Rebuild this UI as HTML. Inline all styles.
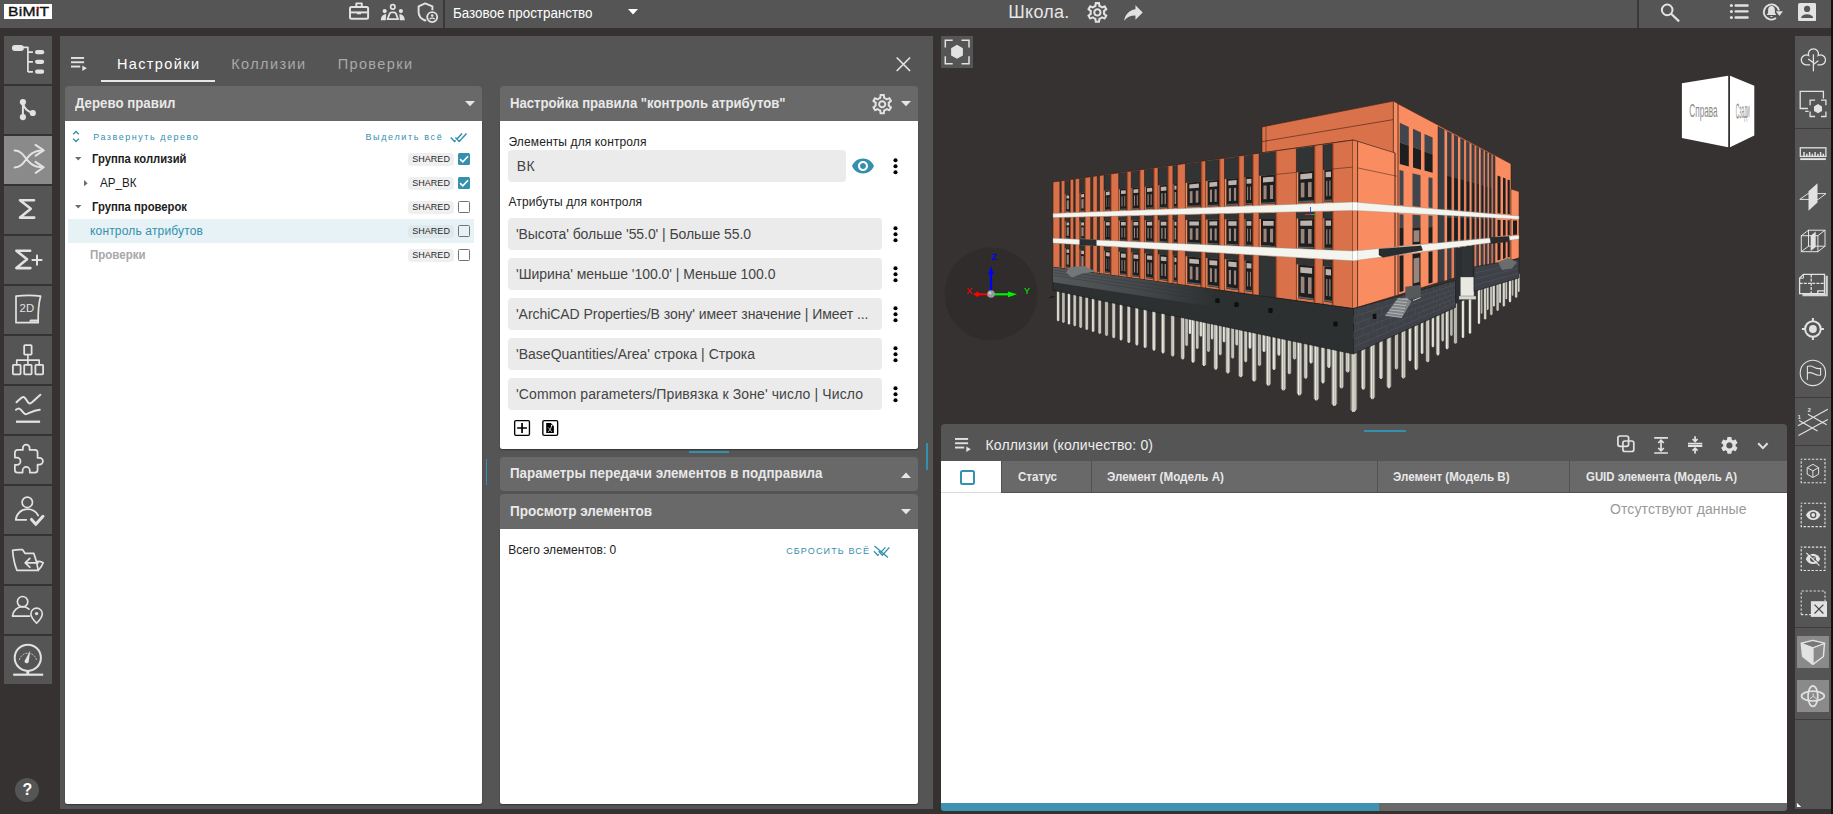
<!DOCTYPE html>
<html lang="ru"><head><meta charset="utf-8"><title>BiMiT</title>
<style>
html,body{margin:0;padding:0}
body{width:1833px;height:814px;overflow:hidden;background:#363231;position:relative;font-family:"Liberation Sans", sans-serif;}
div,span,svg{position:absolute;box-sizing:border-box}
.t{white-space:nowrap;line-height:1}
</style></head><body>
<div style="left:0px;top:0px;width:1831px;height:28px;background:#555555;"></div>
<div style="left:1831px;top:0px;width:2px;height:814px;background:#141212;"></div>
<div style="left:4px;top:4px;width:48px;height:15px;background:#ffffff;"></div>
<div style="left:443.2px;top:0px;width:1.8px;height:28px;background:#3b3838;"></div>
<svg style="left:628px;top:9px" width="10" height="6" viewBox="0 0 10 6"><path d="M0 0h10L5 5.4z" fill="#fff"/></svg>
<div style="left:1637.2px;top:0px;width:1.8px;height:28px;background:#3b3838;"></div>
<div style="left:4px;top:36px;width:48px;height:48px;background:#555555;"></div>
<div style="left:4px;top:86px;width:48px;height:48px;background:#555555;"></div>
<div style="left:4px;top:136px;width:48px;height:48px;background:#8a8a8a;"></div>
<div style="left:4px;top:186px;width:48px;height:48px;background:#555555;"></div>
<div style="left:4px;top:236px;width:48px;height:48px;background:#555555;"></div>
<div style="left:4px;top:286px;width:48px;height:48px;background:#555555;"></div>
<div style="left:4px;top:336px;width:48px;height:48px;background:#555555;"></div>
<div style="left:4px;top:386px;width:48px;height:48px;background:#555555;"></div>
<div style="left:4px;top:436px;width:48px;height:48px;background:#555555;"></div>
<div style="left:4px;top:486px;width:48px;height:48px;background:#555555;"></div>
<div style="left:4px;top:536px;width:48px;height:48px;background:#555555;"></div>
<div style="left:4px;top:586px;width:48px;height:48px;background:#555555;"></div>
<div style="left:4px;top:636px;width:48px;height:48px;background:#555555;"></div>
<div style="left:15px;top:778px;width:24px;height:24px;background:#555555;border-radius:50%"></div>
<div style="left:60px;top:36px;width:873px;height:773px;background:#555555;"></div>
<div style="left:101px;top:80px;width:114px;height:2px;background:#e6e6e6;"></div>
<div style="left:65px;top:86px;width:417px;height:35px;background:#696969;border-radius:4px 4px 0 0"></div>
<div style="left:65px;top:121px;width:417px;height:683px;background:#ffffff;border-radius:0 0 2.5px 2.5px;box-shadow:0 1px 1.5px rgba(0,0,0,.4)"></div>
<svg style="left:465px;top:101px" width="10" height="6" viewBox="0 0 10 6"><path d="M0 0h10L5 5.2z" fill="#e6e6e6"/></svg>
<div style="left:68px;top:219px;width:406px;height:23.5px;background:#e6f2f5;"></div>
<div style="left:408px;top:152.5px;width:46px;height:13.5px;background:#efefef;border-radius:4px"></div>
<svg style="left:458px;top:153px" width="12" height="12" viewBox="0 0 12 12"><rect width="12" height="12" rx="1.5" fill="#3490ad"/><path d="M2 6.100l2.800 2.800 5.300-5.600" stroke="#fff" stroke-width="1.600" fill="none"/></svg>
<div style="left:408px;top:176.5px;width:46px;height:13.5px;background:#efefef;border-radius:4px"></div>
<svg style="left:458px;top:177px" width="12" height="12" viewBox="0 0 12 12"><rect width="12" height="12" rx="1.5" fill="#3490ad"/><path d="M2 6.100l2.800 2.800 5.300-5.600" stroke="#fff" stroke-width="1.600" fill="none"/></svg>
<div style="left:408px;top:200.5px;width:46px;height:13.5px;background:#efefef;border-radius:4px"></div>
<div style="left:458px;top:201px;width:12px;height:12px;background:transparent;border:1.5px solid #727272;border-radius:1.5px"></div>
<div style="left:408px;top:224.5px;width:46px;height:13.5px;background:#dfe9ec;border-radius:4px"></div>
<div style="left:458px;top:225px;width:12px;height:12px;background:transparent;border:1.5px solid #727272;border-radius:1.5px"></div>
<div style="left:408px;top:248.5px;width:46px;height:13.5px;background:#efefef;border-radius:4px"></div>
<div style="left:458px;top:249px;width:12px;height:12px;background:transparent;border:1.5px solid #727272;border-radius:1.5px"></div>
<svg style="left:75.2px;top:157.2px" width="6.4" height="4" viewBox="0 0 6.4 4"><path d="M0 0h6.4L3.2 3.5z" fill="#6c6c6c"/></svg>
<svg style="left:75.2px;top:205.2px" width="6.4" height="4" viewBox="0 0 6.4 4"><path d="M0 0h6.4L3.2 3.5z" fill="#6c6c6c"/></svg>
<svg style="left:84.2px;top:179.6px" width="4" height="6.4" viewBox="0 0 4 6.4"><path d="M0 0v6.4L3.6 3.2z" fill="#6c6c6c"/></svg>
<div style="left:500px;top:86px;width:418px;height:35px;background:#696969;border-radius:4px 4px 0 0"></div>
<div style="left:500px;top:121px;width:418px;height:328px;background:#ffffff;border-radius:0 0 2.5px 2.5px;box-shadow:0 1px 1.5px rgba(0,0,0,.4)"></div>
<svg style="left:901px;top:101px" width="10" height="6" viewBox="0 0 10 6"><path d="M0 0h10L5 5.2z" fill="#e6e6e6"/></svg>
<div style="left:508px;top:150px;width:338px;height:32px;background:#ebebeb;border-radius:4px"></div>
<div style="left:508px;top:218px;width:374px;height:32px;background:#ebebeb;border-radius:4px"></div>
<div style="left:508px;top:258px;width:374px;height:32px;background:#ebebeb;border-radius:4px"></div>
<div style="left:508px;top:298px;width:374px;height:32px;background:#ebebeb;border-radius:4px"></div>
<div style="left:508px;top:338px;width:374px;height:32px;background:#ebebeb;border-radius:4px"></div>
<div style="left:508px;top:378px;width:374px;height:32px;background:#ebebeb;border-radius:4px"></div>
<svg style="left:893px;top:157.7px" width="5" height="17" viewBox="0 0 5 17"><circle cx="2.5" cy="2.3" r="2.05"/><circle cx="2.5" cy="8.3" r="2.05"/><circle cx="2.5" cy="14.3" r="2.05"/></svg>
<svg style="left:893px;top:225.7px" width="5" height="17" viewBox="0 0 5 17"><circle cx="2.5" cy="2.3" r="2.05"/><circle cx="2.5" cy="8.3" r="2.05"/><circle cx="2.5" cy="14.3" r="2.05"/></svg>
<svg style="left:893px;top:265.7px" width="5" height="17" viewBox="0 0 5 17"><circle cx="2.5" cy="2.3" r="2.05"/><circle cx="2.5" cy="8.3" r="2.05"/><circle cx="2.5" cy="14.3" r="2.05"/></svg>
<svg style="left:893px;top:305.7px" width="5" height="17" viewBox="0 0 5 17"><circle cx="2.5" cy="2.3" r="2.05"/><circle cx="2.5" cy="8.3" r="2.05"/><circle cx="2.5" cy="14.3" r="2.05"/></svg>
<svg style="left:893px;top:345.7px" width="5" height="17" viewBox="0 0 5 17"><circle cx="2.5" cy="2.3" r="2.05"/><circle cx="2.5" cy="8.3" r="2.05"/><circle cx="2.5" cy="14.3" r="2.05"/></svg>
<svg style="left:893px;top:385.7px" width="5" height="17" viewBox="0 0 5 17"><circle cx="2.5" cy="2.3" r="2.05"/><circle cx="2.5" cy="8.3" r="2.05"/><circle cx="2.5" cy="14.3" r="2.05"/></svg>
<div style="left:688.5px;top:450.6px;width:40.5px;height:2px;background:#3490ad;"></div>
<div style="left:485.5px;top:459px;width:1.6px;height:26px;background:#3490ad;"></div>
<div style="left:926.4px;top:443px;width:1.6px;height:27px;background:#3490ad;"></div>
<div style="left:500px;top:456.5px;width:418px;height:34px;background:#696969;border-radius:4px"></div>
<svg style="left:900.5px;top:471.5px" width="10" height="6" viewBox="0 0 10 6"><path d="M0 6h10L5 0.6z" fill="#e6e6e6"/></svg>
<div style="left:500px;top:494px;width:418px;height:35px;background:#696969;border-radius:4px 4px 0 0"></div>
<div style="left:500px;top:528.5px;width:418px;height:275.5px;background:#ffffff;border-radius:0 0 2.5px 2.5px;box-shadow:0 1px 1.5px rgba(0,0,0,.4)"></div>
<svg style="left:900.5px;top:509px" width="10" height="6" viewBox="0 0 10 6"><path d="M0 0h10L5 5.2z" fill="#e6e6e6"/></svg>
<div style="left:941px;top:36px;width:32px;height:32px;background:#555555;"></div>
<div style="left:941px;top:424px;width:846px;height:37px;background:#555555;border-radius:4px 4px 0 0"></div>
<div style="left:1364px;top:430.3px;width:42px;height:2px;background:#3490ad;"></div>
<div style="left:941px;top:461px;width:60px;height:32px;background:#ffffff;"></div>
<div style="left:1001px;top:461px;width:786px;height:31.6px;background:#696969;border-left:1px solid #525252;border-bottom:1px solid #525252"></div>
<div style="left:1090.5px;top:461px;width:1px;height:31px;background:#525252;"></div>
<div style="left:1376.5px;top:461px;width:1px;height:31px;background:#525252;"></div>
<div style="left:1568.5px;top:461px;width:1px;height:31px;background:#525252;"></div>
<div style="left:941px;top:492.6px;width:846px;height:310.4px;background:#ffffff;"></div>
<div style="left:941px;top:491.8px;width:60px;height:0.8px;background:#dcdcdc;"></div>
<div style="left:959.5px;top:469.5px;width:15px;height:15px;background:#ffffff;border:2px solid #3490ad;border-radius:2.5px"></div>
<div style="left:941px;top:803px;width:437.5px;height:8px;background:#3c94b1;border-radius:0 0 0 3px"></div>
<div style="left:1378.5px;top:803px;width:408.5px;height:8px;background:#696969;border-radius:0 0 3px 0"></div>
<div style="left:1795px;top:36px;width:36px;height:773px;background:#555555;"></div>
<div style="left:1795px;top:127.5px;width:36px;height:1.2px;background:#3f3c3b;"></div>
<div style="left:1795px;top:396.5px;width:36px;height:1.2px;background:#3f3c3b;"></div>
<div style="left:1795px;top:444.5px;width:36px;height:1.2px;background:#3f3c3b;"></div>
<div style="left:1795px;top:627.0px;width:36px;height:1.2px;background:#3f3c3b;"></div>
<div style="left:1795px;top:718.8px;width:36px;height:1.2px;background:#3f3c3b;"></div>
<div style="left:1797px;top:636px;width:32px;height:32px;background:#8a8a8a;"></div>
<div style="left:1797px;top:680px;width:32px;height:32px;background:#8a8a8a;"></div>
<svg style="left:4px;top:36px;" width="48" height="48" viewBox="0 0 48 48"><g fill="none" stroke="#e2e2e2" stroke-width="1.8" stroke-linecap="round" stroke-linejoin="round"><rect x="7.9" y="9" width="12" height="6" rx="3" fill="#e2e2e2" stroke="none"/><path d="M19 11.3h4.9V36M23.9 16.2h5M23.9 25.8h5M23.9 35.8h5" stroke-width="1.7" stroke-linecap="butt"/><rect x="31" y="14" width="9.2" height="4.3" rx="2.15" fill="#e2e2e2" stroke="none"/><rect x="31" y="23.7" width="9.2" height="4.3" rx="2.15" fill="#e2e2e2" stroke="none"/><rect x="31" y="33.5" width="9.2" height="4.3" rx="2.15" fill="#e2e2e2" stroke="none"/></g></svg>
<svg style="left:4px;top:86px;" width="48" height="48" viewBox="0 0 48 48"><g fill="none" stroke="#e2e2e2" stroke-width="1.8" stroke-linecap="round" stroke-linejoin="round"><circle cx="18.9" cy="16" r="3.1" fill="#e2e2e2" stroke="none"/><circle cx="18.9" cy="31.1" r="3.1" fill="#e2e2e2" stroke="none"/><circle cx="28.8" cy="27" r="3.1" fill="#e2e2e2" stroke="none"/><path d="M18.9 16v15M18.9 17c1 5 4.5 8.5 9.9 10" stroke-width="2"/></g></svg>
<svg style="left:4px;top:136px;" width="48" height="48" viewBox="0 0 48 48"><g fill="none" stroke="#e2e2e2" stroke-width="1.8" stroke-linecap="round" stroke-linejoin="round"><path d="M10.6 14.5c12 0 10 16.8 28 16.8M10.6 31.5c12 0 10-17 28-17" stroke-width="2"/><path d="M31.5 8.8l8.2 5.6-8 5.3M31.5 25.8l8.2 5.5-8 5.6" stroke-width="2"/></g></svg>
<svg style="left:4px;top:186px;" width="48" height="48" viewBox="0 0 48 48"><g fill="none" stroke="#e2e2e2" stroke-width="1.8" stroke-linecap="round" stroke-linejoin="round"><path d="M30 14.2H16l10.8 8.6L16 31.6h14.2" stroke-width="2.6"/></g></svg>
<svg style="left:4px;top:236px;" width="48" height="48" viewBox="0 0 48 48"><g fill="none" stroke="#e2e2e2" stroke-width="1.8" stroke-linecap="round" stroke-linejoin="round"><path d="M26.2 14.7H12.4l10.6 8.6-10.6 8.8h14" stroke-width="2.6"/><path d="M33 19.5v9.2M28.4 24.1h9.2" stroke-width="2"/></g></svg>
<svg style="left:4px;top:286px;" width="48" height="48" viewBox="0 0 48 48"><g fill="none" stroke="#e2e2e2" stroke-width="1.8" stroke-linecap="round" stroke-linejoin="round"><path d="M12 10.2c8-1 16-1.2 24.6 0-2.2 8-2.6 16.500-2.400 26.5H12z" stroke-width="1.7"/><path d="M24.800 35.800l1.600-2.200h7.800v2.200z" fill="#e2e2e2" stroke="none"/><text x="15.6" y="26.4" font-family="Liberation Sans, sans-serif" font-size="10.5" fill="#e2e2e2" stroke="none" textLength="14.5" lengthAdjust="spacingAndGlyphs">2D</text></g></svg>
<svg style="left:4px;top:336px;" width="48" height="48" viewBox="0 0 48 48"><g fill="none" stroke="#e2e2e2" stroke-width="1.8" stroke-linecap="round" stroke-linejoin="round"><rect x="20.2" y="9.200" width="7.400" height="9.4" rx="0.8"/><rect x="8.900" y="28.8" width="7.700" height="9.5" rx="0.8"/><rect x="20.2" y="28.8" width="7.400" height="9.5" rx="0.8"/><rect x="31.400" y="28.8" width="7.700" height="9.5" rx="0.8"/><path d="M23.9 18.6v10.2M12.700 28.800v-4.700h22.500v4.700" stroke-width="1.6"/></g></svg>
<svg style="left:4px;top:386px;" width="48" height="48" viewBox="0 0 48 48"><g fill="none" stroke="#e2e2e2" stroke-width="1.8" stroke-linecap="round" stroke-linejoin="round"><path d="M12.5 16.300c3-3 5-5.400 7-5.400 2.200 0 3.800 6.600 6.200 6.600 2.200 0 6.300-5.200 10.700-8.700M12 23.800c1.200-1 2.200-1.500 3.400-1.200 2 .6 4 5.600 6.300 5.600 2.400 0 6.500-3.800 14.100-4.400" stroke-width="2"/><path d="M12 35.700h24.100" stroke-width="2.300" stroke-linecap="butt"/></g></svg>
<svg style="left:4px;top:436px;" width="48" height="48" viewBox="0 0 48 48"><g fill="none" stroke="#e2e2e2" stroke-width="1.8" stroke-linecap="round" stroke-linejoin="round"><g transform="translate(8.2,7.200) scale(1.335)"><path d="M20.5 11H19V7c0-1.100-.9-2-2-2h-4V3.500C13 2.120 11.880 1 10.500 1S8 2.120 8 3.500V5H4c-1.100 0-1.990.9-1.990 2v3.800H3.500c1.490 0 2.700 1.210 2.700 2.700s-1.210 2.700-2.700 2.700H2V20c0 1.100.9 2 2 2h3.800v-1.500c0-1.490 1.210-2.700 2.700-2.700 1.490 0 2.700 1.210 2.700 2.700V22H17c1.100 0 2-.9 2-2v-4h1.500c1.380 0 2.500-1.120 2.500-2.500S21.880 11 20.500 11z" stroke-width="1.300"/></g></g></svg>
<svg style="left:4px;top:486px;" width="48" height="48" viewBox="0 0 48 48"><g fill="none" stroke="#e2e2e2" stroke-width="1.8" stroke-linecap="round" stroke-linejoin="round"><circle cx="23.300" cy="16.300" r="5.200" stroke-width="1.700"/><path d="M22.300 33.800H11.700c.6-6 5.600-10.600 11.600-10.600 4.800 0 8.900 2.600 10.900 6.300" stroke-width="1.700"/><path d="M27.500 33.400l4.300 4.900 7.200-8" stroke-width="3"/></g></svg>
<svg style="left:4px;top:536px;" width="48" height="48" viewBox="0 0 48 48"><g fill="none" stroke="#e2e2e2" stroke-width="1.8" stroke-linecap="round" stroke-linejoin="round"><path d="M8.600 14.400c3.500-.9 7-.9 10-.7l2.500 3.700h8.700c2.200 5.500 3.500 11 4.400 16.900H12.900C10.400 28 9.100 21 8.600 14.400z" stroke-width="1.700"/><path d="M33 25.500c2-.2 4.200.2 6.200 1.300-1 2.800-2.600 5.300-5 7.500" stroke-width="1.700"/><path d="M34 26.800H21.300M25.800 22.400l-4.600 4.400 4.600 4.400" stroke-width="1.800"/></g></svg>
<svg style="left:4px;top:586px;" width="48" height="48" viewBox="0 0 48 48"><g fill="none" stroke="#e2e2e2" stroke-width="1.8" stroke-linecap="round" stroke-linejoin="round"><circle cx="18.600" cy="15.700" r="5.200" stroke-width="1.700"/><path d="M25.500 30.100H8.500c.5-5.300 4.800-9.400 10.100-9.400 2.500 0 4.600.9 6.400 2.500" stroke-width="1.700"/><path d="M32.600 37.300c-3.600-3.600-5.700-6.400-5.700-9.500a5.700 5.700 0 0 1 11.400 0c0 3.100-2.100 5.900-5.700 9.500z" stroke-width="1.600"/><circle cx="32.600" cy="27.600" r="1.700" fill="#e2e2e2" stroke="none"/></g></svg>
<svg style="left:4px;top:636px;" width="48" height="48" viewBox="0 0 48 48"><g fill="none" stroke="#e2e2e2" stroke-width="1.8" stroke-linecap="round" stroke-linejoin="round"><circle cx="23.800" cy="21.800" r="13.100" stroke-width="2"/><path d="M9.200 38.700h30" stroke-width="2.200" stroke-linecap="butt"/><path d="M23.800 35v3.500" stroke-width="3" stroke-linecap="butt"/><path d="M26.300 14.600l-1.600 11.300a2.200 2.200 0 0 1-4.200-1z" fill="#e2e2e2" stroke="none"/><path d="M15.500 23.500a8.800 8.800 0 0 1 16.900 0" stroke-width="1" stroke-dasharray="1.200 1.800" opacity=".8"/></g></svg>
<svg style="left:340px;top:0px;" width="110" height="28" viewBox="0 0 110 28"><g fill="none" stroke="#e2e2e2" stroke-width="2" stroke-linejoin="round"><rect x="10" y="7" width="18.100" height="11.800" rx="1.500"/><path d="M16.300 7V3.400h5.500V7" stroke-width="1.900"/><path d="M10 12.400h18" stroke-width="2"/><path d="M17 12.600h4v1.700h-4z" fill="#e2e2e2" stroke="none"/><circle cx="52.800" cy="6.900" r="2.200" stroke-width="1.700"/><path d="M47.500 19.200l2-5.300c.4-1 1.200-1.600 2.200-1.600h2.200c1 0 1.800.6 2.200 1.600l2 5.300z" stroke-width="1.800"/><circle cx="44.700" cy="11.100" r="2.100" fill="#e2e2e2" stroke="none"/><circle cx="60.900" cy="11.100" r="2.100" fill="#e2e2e2" stroke="none"/><path d="M40.800 20.200c.2-3.300 1.800-5.700 5.400-6.100l-.4 6.100zM64.800 20.200c-.2-3.300-1.800-5.700-5.400-6.100l.4 6.100z" fill="#e2e2e2" stroke="none"/><path d="M92.400 10.300V6.400l-7.200-3-6.600 3V12c0 4 2.800 7 6.600 8.500l1-.5" stroke-width="1.900"/><circle cx="92.200" cy="17.100" r="5" stroke-width="1.900"/><circle cx="92.200" cy="15.600" r="1.300" fill="#e2e2e2" stroke="none"/><path d="M89.700 19.200c.8-1.500 4.200-1.500 5 0" stroke-width="1.300"/></g></svg>
<svg style="left:1085.2px;top:-0.3px;" width="24.8" height="24.8" viewBox="0 0 24 24"><path d="M19.430 12.980c.040-.320.070-.640.070-.980 0-.340-.030-.660-.070-.980l2.110-1.650c.190-.150.240-.420.120-.640l-2-3.460c-.090-.160-.260-.250-.440-.250-.060 0-.120.010-.170.030l-2.490 1c-.520-.400-1.080-.730-1.690-.980l-.380-2.650C14.460 2.180 14.250 2 14 2h-4c-.250 0-.460.180-.490.420l-.380 2.650c-.610.250-1.170.590-1.690.980l-2.490-1c-.060-.020-.120-.030-.180-.030-.170 0-.340.090-.430.250l-2 3.460c-.130.220-.070.490.120.640l2.110 1.650c-.040.320-.070.650-.070.980 0 .330.030.660.070.980l-2.110 1.650c-.190.150-.240.420-.120.640l2 3.460c.090.160.260.250.440.250.060 0 .120-.010.170-.030l2.490-1c.520.400 1.080.730 1.690.980l.380 2.650c.030.240.240.420.490.420h4c.250 0 .460-.180.490-.420l.380-2.650c.610-.250 1.170-.590 1.690-.980l2.490 1c.060.020.120.030.180.030.170 0 .340-.090.430-.250l2-3.460c.120-.220.070-.490-.120-.640l-2.110-1.650zm-1.980-1.710c.040.310.050.520.050.730 0 .210-.020.430-.050.730l-.140 1.130.890.700 1.080.840-.700 1.210-1.270-.510-1.040-.420-.900.680c-.430.320-.840.560-1.250.730l-1.060.430-.160 1.130-.200 1.350h-1.400l-.190-1.350-.160-1.130-1.060-.430c-.430-.180-.830-.410-1.230-.710l-.910-.700-1.060.430-1.270.510-.700-1.210 1.080-.840.890-.700-.140-1.130c-.030-.310-.050-.540-.050-.740s.020-.430.050-.730l.140-1.130-.890-.700-1.080-.840.700-1.210 1.270.510 1.040.420.900-.680c.430-.320.840-.560 1.250-.730l1.060-.430.160-1.130.200-1.350h1.390l.190 1.350.160 1.130 1.060.430c.430.180.830.410 1.230.710l.910.700 1.060-.430 1.270-.510.700 1.210-1.070.850-.890.700.140 1.130zM12 8c-2.210 0-4 1.790-4 4s1.790 4 4 4 4-1.790 4-4-1.790-4-4-4zm0 6c-1.100 0-2-.9-2-2s.9-2 2-2 2 .9 2 2-.9 2-2 2z" fill="#e2e2e2"/></svg>
<svg style="left:1120.9px;top:-0.1px;" width="24.8" height="24.8" viewBox="0 0 24 24"><path d="M14 9V5l7 7-7 7v-4.100c-5 0-8.500 1.600-11 5.100 1-5 4-10 11-11z" fill="#e2e2e2"/></svg>
<svg style="left:1655px;top:0px;" width="30" height="28" viewBox="0 0 30 28"><g fill="none" stroke="#e2e2e2" stroke-width="2"><circle cx="12.200" cy="9.900" r="5.300"/><path d="M16.100 13.800l8 7.600" stroke-width="2.200"/></g></svg>
<svg style="left:1725px;top:0px;" width="30" height="28" viewBox="0 0 30 28"><g fill="#e2e2e2"><circle cx="6.400" cy="5.500" r="1.500"/><circle cx="6.400" cy="11.400" r="1.500"/><circle cx="6.400" cy="17.500" r="1.500"/><rect x="9.500" y="4.300" width="14.200" height="2.400" rx="1"/><rect x="9.500" y="10.200" width="14.200" height="2.400" rx="1"/><rect x="9.500" y="16.300" width="14.200" height="2.400" rx="1"/></g></svg>
<svg style="left:1760px;top:0px;" width="26" height="28" viewBox="0 0 26 28"><g fill="none" stroke="#e2e2e2" stroke-width="1.900"><path d="M18.900 10.500a7.600 7.600 0 1 0-2.900 7.600"/></g><path d="M15.900 11.300h7l-3.500 4.800z" fill="#e2e2e2"/><path d="M11.500 5.900c2.300 0 3.400 1.800 3.400 4v3.200l1.200 1.300v.7H6.900v-.7l1.200-1.300V9.900c0-2.200 1.100-4 3.400-4zM10.300 15.900h2.400c0 .7-.5 1.200-1.200 1.200s-1.200-.5-1.200-1.200z" fill="#e2e2e2"/></svg>
<svg style="left:1797.8px;top:3px;" width="18.2" height="18.2" viewBox="0 0 18.2 18.2"><rect width="18.200" height="18.200" rx="1.800" fill="#e2e2e2"/><circle cx="9.100" cy="5.900" r="3.100" fill="#555555"/><path d="M3 14.900c.4-2.400 3-3.700 6.100-3.700s5.700 1.300 6.100 3.700z" fill="#555555"/></svg>
<svg style="left:70.9px;top:56.8px;" width="17" height="15" viewBox="0 0 17 15"><g fill="#e2e2e2"><rect x="0" y="0" width="13.100" height="1.900"/><rect x="0" y="4.300" width="13.100" height="1.900"/><rect x="0" y="8.600" width="9.200" height="1.900"/><path d="M11.300 8.600l4.600 2.700-4.600 2.700z"/></g></svg>
<svg style="left:955px;top:437.7px;" width="17" height="15" viewBox="0 0 17 15"><g fill="#e2e2e2"><rect x="0" y="0" width="13.100" height="1.900"/><rect x="0" y="4.300" width="13.100" height="1.900"/><rect x="0" y="8.600" width="9.200" height="1.900"/><path d="M11.300 8.600l4.600 2.700-4.600 2.700z"/></g></svg>
<svg style="left:895px;top:56px;" width="17" height="17" viewBox="0 0 17 17"><path d="M1.700 1.500l13.400 13.500M15.100 1.500L1.700 15" stroke="#e2e2e2" stroke-width="1.700" fill="none"/></svg>
<svg style="left:869.6px;top:91.6px;" width="24.4" height="24.4" viewBox="0 0 24 24"><path d="M19.430 12.980c.040-.320.070-.640.070-.980 0-.340-.030-.660-.070-.980l2.110-1.650c.190-.150.240-.420.120-.640l-2-3.460c-.090-.160-.260-.250-.440-.250-.060 0-.120.010-.170.030l-2.490 1c-.520-.400-1.080-.730-1.690-.980l-.380-2.650C14.460 2.180 14.250 2 14 2h-4c-.250 0-.460.180-.490.420l-.380 2.650c-.610.250-1.170.590-1.690.980l-2.490-1c-.060-.020-.120-.030-.180-.030-.170 0-.340.090-.430.250l-2 3.460c-.130.220-.070.490.120.640l2.110 1.650c-.040.320-.070.650-.070.980 0 .330.030.660.070.980l-2.110 1.650c-.190.150-.240.420-.120.640l2 3.460c.090.160.260.250.440.250.060 0 .120-.010.170-.030l2.490-1c.520.400 1.080.730 1.690.980l.380 2.650c.030.240.240.420.490.420h4c.250 0 .460-.180.490-.420l.380-2.650c.610-.250 1.170-.590 1.690-.980l2.490 1c.060.020.120.030.180.030.170 0 .340-.090.430-.250l2-3.460c.120-.220.070-.490-.120-.640l-2.110-1.650zm-1.980-1.710c.040.310.050.520.050.730 0 .210-.020.430-.050.730l-.140 1.130.890.700 1.080.840-.700 1.210-1.270-.510-1.040-.420-.900.680c-.430.320-.840.560-1.250.730l-1.060.430-.160 1.130-.200 1.350h-1.400l-.190-1.350-.160-1.130-1.060-.430c-.430-.180-.830-.410-1.230-.710l-.910-.700-1.060.430-1.270.510-.700-1.210 1.080-.840.890-.700-.140-1.130c-.030-.310-.050-.540-.050-.740s.020-.430.050-.730l.140-1.130-.890-.700-1.080-.840.700-1.210 1.270.510 1.040.420.900-.680c.430-.320.840-.560 1.250-.730l1.060-.430.160-1.130.200-1.350h1.390l.190 1.350.160 1.130 1.060.430c.430.180.830.410 1.230.710l.910.700 1.060-.430 1.270-.510.700 1.210-1.070.850-.890.700.140 1.130zM12 8c-2.210 0-4 1.790-4 4s1.790 4 4 4 4-1.790 4-4-1.790-4-4-4zm0 6c-1.100 0-2-.9-2-2s.9-2 2-2 2 .9 2 2-.9 2-2 2z" fill="#e2e2e2"/></svg>
<svg style="left:851.2px;top:154px;" width="24" height="24" viewBox="0 0 24 24"><path d="M12 4.500C7 4.500 2.730 7.610 1 12c1.730 4.390 6 7.500 11 7.500s9.270-3.110 11-7.500c-1.730-4.390-6-7.500-11-7.500zM12 17c-2.760 0-5-2.240-5-5s2.240-5 5-5 5 2.240 5 5-2.240 5-5 5zm0-8c-1.660 0-3 1.340-3 3s1.340 3 3 3 3-1.340 3-3-1.340-3-3-3z" fill="#3490ad"/></svg>
<svg style="left:513px;top:419px;" width="18" height="18" viewBox="0 0 18 18"><rect x="1.650" y="1.550" width="14.800" height="14.800" rx="1.300" fill="#fff" stroke="#000" stroke-width="1.350"/><path d="M9.050 4.100v9.800M4.150 9h9.800" stroke="#000" stroke-width="1.700"/></svg>
<svg style="left:541px;top:419px;" width="18" height="18" viewBox="0 0 18 18"><rect x="1.850" y="1.550" width="14.800" height="14.800" rx="1.300" fill="#fff" stroke="#000" stroke-width="1.350"/><path d="M5.200 4.100h4.700l3 3.100v6.700H5.200z" fill="#000"/><path d="M7.400 8.600l3.300 4.200M10.900 6.300l-1.400 3.600-2.300 2.900" stroke="#ddd" stroke-width="0.900" fill="none"/><circle cx="10.600" cy="6.500" r="0.700" fill="#fff"/></svg>
<svg style="left:72px;top:129.8px;" width="8" height="13" viewBox="0 0 8 13"><path d="M1.200 4.200L4 1.500l2.800 2.700M1.200 8.800L4 11.500l2.800-2.700" fill="none" stroke="#3490ad" stroke-width="1.400"/></svg>
<svg style="left:450px;top:132px;" width="18" height="11" viewBox="0 0 18 11"><path d="M0.800 5.400l3.800 4 1-1M5.400 5.400l3.800 4 7.300-8M12 1.400l-5 5.500" fill="none" stroke="#3490ad" stroke-width="1.500"/></svg>
<svg style="left:873px;top:544.5px;" width="18" height="13" viewBox="0 0 18 13"><path d="M1 6.200l3.800 4 1-1M5.600 6.200l3.800 4 7-7.800M12.400 2.400l-4.600 5M1.500 1l13.500 11.500" fill="none" stroke="#3490ad" stroke-width="1.300"/></svg>
<svg style="left:941px;top:36px;" width="32" height="32" viewBox="0 0 32 32"><g fill="none" stroke="#e2e2e2" stroke-width="1.500"><path d="M4.300 11.500V4.300h7.400M20.500 4.300h7.500v7.200M28 20.300v7.400h-7.500M11.700 27.700H4.300v-7.400"/></g><path d="M16 8.800l5.900 3.400v7.200L16 22.800l-5.900-3.400v-7.200z" fill="#e2e2e2"/></svg>
<svg style="left:1616px;top:434px;" width="20" height="20" viewBox="0 0 20 20"><g fill="none" stroke="#e2e2e2" stroke-width="1.700"><rect x="1.900" y="2" width="10.700" height="10.300" rx="2"/><rect x="6.900" y="7" width="10.900" height="10.500" rx="2"/></g></svg>
<svg style="left:1653px;top:434px;" width="18" height="22" viewBox="0 0 18 22"><g fill="none" stroke="#e2e2e2" stroke-width="1.700"><path d="M1.200 3.900h13.700M1.200 19h13.700M8 6.500v10M5.200 9l2.800-2.800L10.800 9M5.200 14l2.800 2.800 2.800-2.800"/></g></svg>
<svg style="left:1687px;top:434px;" width="18" height="22" viewBox="0 0 18 22"><g fill="none" stroke="#e2e2e2" stroke-width="1.700"><path d="M1 9.600h14.300M1 12h14.300" stroke-width="1.800"/><path d="M8.100 2.200v5.200M5.600 5l2.500 2.500L10.600 5M8.100 19.400v-5.200M5.600 16.600l2.500-2.500 2.500 2.500"/></g></svg>
<svg style="left:1718.6px;top:434.6px;" width="20.8" height="20.8" viewBox="0 0 24 24"><path d="M19.140 12.940c.040-.300.060-.610.060-.940 0-.320-.020-.640-.070-.940l2.030-1.580c.180-.140.230-.410.120-.610l-1.920-3.320c-.120-.220-.370-.290-.590-.220l-2.390.960c-.500-.380-1.030-.700-1.620-.940l-.360-2.540c-.040-.240-.240-.410-.480-.410h-3.840c-.240 0-.430.170-.470.410l-.360 2.540c-.590.240-1.130.570-1.620.940l-2.390-.960c-.220-.080-.470 0-.590.220L2.740 8.870c-.120.210-.080.470.120.610l2.030 1.580c-.050.300-.090.630-.090.940s.020.640.070.940l-2.030 1.580c-.180.140-.230.410-.120.610l1.920 3.320c.120.220.370.290.590.220l2.390-.960c.500.380 1.030.700 1.620.940l.360 2.540c.050.240.240.410.480.410h3.840c.240 0 .440-.170.470-.410l.360-2.540c.590-.240 1.130-.560 1.620-.940l2.390.960c.220.080.470 0 .590-.220l1.920-3.320c.120-.220.070-.470-.120-.610l-2.010-1.580zM12 15.600c-1.980 0-3.600-1.620-3.600-3.600s1.620-3.600 3.600-3.600 3.600 1.620 3.600 3.600-1.620 3.600-3.600 3.600z" fill="#e2e2e2"/></svg>
<svg style="left:1756px;top:441px;" width="14" height="10" viewBox="0 0 14 10"><path d="M2.200 2.200l4.700 4.900 4.700-4.900" fill="none" stroke="#e2e2e2" stroke-width="2"/></svg>
<svg style="left:1795px;top:36px;" width="36" height="773" viewBox="0 0 36 773"><g fill="none" stroke="#e2e2e2" stroke-width="1.300" stroke-linecap="round"><path d="M14.600 28.900H11.300A5 5 0 1 1 13.600 19.460A5.050 5.050 0 1 1 23.200 19.460A5 5 0 1 1 25.500 28.900H22.900"/><path d="M18.400 18.800v16M13.600 23.300l4.800 3.400M22.900 25l-4.500 3.500"/></g><g fill="none" stroke="#e2e2e2" stroke-width="1.300"><path d="M28.400 62.400v-7h-23.200v17.100h7.700M10.200 75.300h3.400"/><path d="M15.100 69.200v-5h5M26 64.200h4.900v5M30.900 75.500v5H26M20.100 80.500h-5v-5"/></g><path d="M23 68.100l4 2.300v4.600l-4 2.300-4-2.300v-4.600z" fill="#e2e2e2"/><g fill="none" stroke="#e2e2e2"><rect x="5.300" y="111.800" width="25.600" height="8.600" stroke-width="1.300"/><path d="M5.200 123.100h25.700" stroke-width="1.900"/><path d="M9 120v-4M14.600 120v-4M20.100 120v-4M25.600 120v-4" stroke-width="1.500"/><path d="M11.800 120v-2.200M17.300 120v-2.200M22.900 120v-2.200M28.300 120v-2.200" stroke-width="1.500"/></g><path d="M13.500 155.300l9-8v19.100l-9 8.300z" fill="#e2e2e2"/><path d="M4.800 163.400l8.200-5.800h18l-7.700 5.800z" fill="none" stroke="#e2e2e2" stroke-width="1"/><path d="M15.700 199.700l5-4.200v15.500l-5 4.100z" fill="#e2e2e2"/><g fill="none" stroke="#e2e2e2" stroke-width="1"><rect x="6.300" y="199.700" width="16.600" height="16"/><rect x="13.500" y="194.200" width="16.500" height="16"/><path d="M6.300 199.700l7.200-5.500M22.900 199.700l7.100-5.500M6.300 215.700l7.200-5.500M22.900 215.700l7.100-5.500"/></g><path d="M7.500 259.200h24.200v-19.500" fill="none" stroke="#e2e2e2" stroke-width="2.200" opacity=".9"/><g fill="none" stroke="#e2e2e2" stroke-width="1.300"><path d="M8.400 238.400h21.100v19.300h-24.900v-15.500z"/><path d="M4.600 242.200h3.800v-3.800" stroke-width="1"/><path d="M16.200 238.400v19.300M4.600 247.400h24.900" stroke-dasharray="3 1.200"/><path d="M22.800 257.700v-2.800h6.700"/></g><circle cx="17.900" cy="293" r="7.800" fill="none" stroke="#e2e2e2" stroke-width="2"/><circle cx="17.900" cy="293" r="3.900" fill="#e2e2e2"/><path d="M17.900 282v3.500M17.900 300.500v3.500M6.900 293h3.500M25.400 293h3.500" fill="none" stroke="#e2e2e2" stroke-width="2"/><g fill="none" stroke="#e2e2e2" stroke-width="1.100"><circle cx="17.900" cy="336.900" r="12.700"/><path d="M12.400 343.700v-13.300c3-1 5 0 7 1s4 1.500 6.200 1v6.600c-2.200.5-4.200 0-6.200-1s-4-2-7-1"/></g><g fill="none" stroke="#e2e2e2" stroke-width="1.100"><path d="M3 389.800l29.800-16.500M3.500 399.600l29.300-16.200M4.100 384.500l18.400 10.600M12.900 378.200l18.800 10.500"/></g><text x="2.800" y="383" font-family="Liberation Sans, sans-serif" font-size="5.500" font-weight="700" fill="#e2e2e2">1</text><text x="12.800" y="376.200" font-family="Liberation Sans, sans-serif" font-size="5.500" font-weight="700" fill="#e2e2e2">2</text><rect x="6.200" y="423.3" width="23.800" height="23.400" fill="none" stroke="#e2e2e2" stroke-width="1.100" stroke-dasharray="2.380 1.587" stroke-dashoffset="1.190"/><rect x="6.200" y="467.2" width="23.800" height="23.400" fill="none" stroke="#e2e2e2" stroke-width="1.100" stroke-dasharray="2.380 1.587" stroke-dashoffset="1.190"/><rect x="6.200" y="511.1" width="23.800" height="23.400" fill="none" stroke="#e2e2e2" stroke-width="1.100" stroke-dasharray="2.380 1.587" stroke-dashoffset="1.190"/><path d="M6.200 578.600v-23.600h23.800v10" fill="none" stroke="#e2e2e2" stroke-width="1.100" stroke-dasharray="2.200 1.800"/><path d="M6.200 578.600h9.700" fill="none" stroke="#e2e2e2" stroke-width="1.100" stroke-dasharray="2.200 1.800"/><g fill="none" stroke="#e2e2e2" stroke-width="1"><path d="M17.900 428.300l5.700 3.300v6.600l-5.700 3.300-5.700-3.300v-6.600z"/><path d="M12.200 431.600l5.700 3.300 5.700-3.300M17.900 434.900v6.600"/></g><path d="M18.200 473.900c-3.300 0-6 2.200-7.200 5.100 1.200 2.900 3.900 5.100 7.200 5.100s6-2.200 7.200-5.100c-1.200-2.900-3.900-5.100-7.200-5.100z" fill="#e2e2e2"/><circle cx="18.200" cy="479" r="3.200" fill="#555555"/><circle cx="18.200" cy="479" r="1.900" fill="#e2e2e2"/><path d="M18 517.800c-3.300 0-6 2.200-7.200 5.100 1.200 2.900 3.900 5.100 7.200 5.100s6-2.200 7.200-5.100c-1.200-2.900-3.900-5.100-7.200-5.100z" fill="#e2e2e2"/><circle cx="18" cy="522.900" r="3" fill="#555555"/><circle cx="18.600" cy="522.200" r="1.200" fill="#e2e2e2"/><path d="M11.300 516.900l13.200 12.700" stroke="#e2e2e2" stroke-width="1.300"/><path d="M12.300 516l13.200 12.700" stroke="#555555" stroke-width="1"/><rect x="15.900" y="565.200" width="16.100" height="15.700" fill="#e2e2e2"/><path d="M19.500 568.600l8.900 8.900M28.400 568.600l-8.900 8.900" stroke="#444" stroke-width="1.200"/><path d="M6.300 607.300l11.600 4.400v16.600l-10.200-7.800z" fill="#e2e2e2"/><path d="M6.300 607.300l11.600-2.800 11.600 2.800-1.100 13.200-10.500 7.800-10.200-7.800z" fill="none" stroke="#e2e2e2" stroke-width="1.500" stroke-linejoin="round"/><path d="M6.300 607.300l11.600 4.400 11.600-4.400M17.900 611.700v16.600" fill="none" stroke="#e2e2e2" stroke-width="1.500"/><path d="M8.300 607.500l9.600-2.200 9.600 2.200-9.600 3.400z" fill="#777"/><g fill="none" stroke="#e2e2e2"><ellipse cx="17.900" cy="660.100" rx="11.400" ry="4.900" stroke-width="1.700"/><ellipse cx="17.900" cy="660.100" rx="4.900" ry="10.300" stroke-width="1.700"/><path d="M18.200 657.300v2.800l-3.200 2.800M18.200 660.100l3.400 2.800" stroke-width="0.900"/></g><path d="M1.900 766.700v4.300h4.300z" fill="#ffffff"/></svg>
<svg style="left:941px;top:36px" width="846" height="388" viewBox="941 36 846 388"><defs><linearGradient id="pg" x1="0" x2="1" y1="0" y2="0"><stop offset="0" stop-color="#6b6b66"/><stop offset=".18" stop-color="#a9a9a1"/><stop offset=".34" stop-color="#ecece3"/><stop offset=".5" stop-color="#b4b4ab"/><stop offset=".66" stop-color="#deded5"/><stop offset=".84" stop-color="#9b9b93"/><stop offset="1" stop-color="#6b6b66"/></linearGradient></defs><path d="M1345.3 338.9V370.6L1347.1 372.6H1348.2L1350.0 370.6V338.9z" fill="url(#pg)"/><path d="M1326.6 335.3V366.1L1328.3 368.0H1329.4L1331.0 366.1V335.3z" fill="url(#pg)"/><path d="M1309.0 332.0V361.8L1310.6 363.6H1311.7L1313.3 361.8V332.0z" fill="url(#pg)"/><path d="M1292.5 328.9V357.8L1294.0 359.6H1295.0L1296.6 357.8V328.9z" fill="url(#pg)"/><path d="M1276.9 325.9V354.1L1278.4 355.7H1279.3L1280.8 354.1V325.9z" fill="url(#pg)"/><path d="M1262.1 323.1V350.5L1263.6 352.1H1264.5L1266.0 350.5V323.1z" fill="url(#pg)"/><path d="M1248.2 320.4V347.1L1249.6 348.7H1250.5L1251.9 347.1V320.4z" fill="url(#pg)"/><path d="M1235.0 317.9V343.9L1236.3 345.4H1237.2L1238.5 343.9V317.9z" fill="url(#pg)"/><path d="M1222.4 315.6V340.9L1223.7 342.3H1224.6L1225.9 340.9V315.6z" fill="url(#pg)"/><path d="M1210.5 313.3V338.0L1211.8 339.4H1212.6L1213.9 338.0V313.3z" fill="url(#pg)"/><path d="M1199.2 311.1V335.2L1200.4 336.6H1201.2L1202.5 335.2V311.1z" fill="url(#pg)"/><path d="M1188.4 309.1V332.6L1189.6 334.0H1190.4L1191.6 332.6V309.1z" fill="url(#pg)"/><path d="M1339.2 337.7V386.5L1340.9 388.5H1342.0L1343.8 386.5V337.7z" fill="url(#pg)"/><path d="M1320.8 334.2V381.6L1322.5 383.4H1323.6L1325.2 381.6V334.2z" fill="url(#pg)"/><path d="M1303.6 331.0V376.9L1305.2 378.7H1306.2L1307.8 376.9V331.0z" fill="url(#pg)"/><path d="M1287.4 327.9V372.5L1288.9 374.2H1289.9L1291.4 372.5V327.9z" fill="url(#pg)"/><path d="M1272.1 325.0V368.3L1273.5 370.0H1274.5L1276.0 368.3V325.0z" fill="url(#pg)"/><path d="M1257.6 322.2V364.4L1259.0 366.0H1259.9L1261.4 364.4V322.2z" fill="url(#pg)"/><path d="M1243.9 319.6V360.7L1245.3 362.2H1246.1L1247.5 360.7V319.6z" fill="url(#pg)"/><path d="M1230.9 317.2V357.2L1232.2 358.6H1233.1L1234.4 357.2V317.2z" fill="url(#pg)"/><path d="M1218.6 314.8V353.8L1219.9 355.2H1220.7L1222.0 353.8V314.8z" fill="url(#pg)"/><path d="M1206.8 312.6V350.6L1208.1 352.0H1208.9L1210.2 350.6V312.6z" fill="url(#pg)"/><path d="M1195.7 310.5V347.6L1196.9 349.0H1197.7L1198.9 347.6V310.5z" fill="url(#pg)"/><path d="M1185.0 308.5V344.7L1186.2 346.0H1187.0L1188.2 344.7V308.5z" fill="url(#pg)"/><path d="M1350.3 340.0V409.4L1352.7 412.0H1354.3L1356.7 409.4V340.0z" fill="url(#pg)"/><path d="M1331.3 336.4V403.6L1333.6 406.1H1335.1L1337.3 403.6V336.4z" fill="url(#pg)"/><path d="M1313.5 333.0V398.2L1315.6 400.6H1317.0L1319.2 398.2V333.0z" fill="url(#pg)"/><path d="M1296.6 329.8V393.0L1298.7 395.4H1300.1L1302.2 393.0V329.8z" fill="url(#pg)"/><path d="M1280.8 326.8V388.2L1282.8 390.5H1284.1L1286.1 388.2V326.8z" fill="url(#pg)"/><path d="M1265.8 323.9V383.7L1267.8 385.8H1269.0L1271.0 383.7V323.9z" fill="url(#pg)"/><path d="M1251.7 321.2V379.4L1253.6 381.5H1254.8L1256.6 379.4V321.2z" fill="url(#pg)"/><path d="M1238.3 318.7V375.3L1240.1 377.3H1241.2L1243.1 375.3V318.7z" fill="url(#pg)"/><path d="M1225.5 316.3V371.4L1227.3 373.4H1228.4L1230.2 371.4V316.3z" fill="url(#pg)"/><path d="M1213.5 314.0V367.8L1215.2 369.7H1216.3L1218.0 367.8V314.0z" fill="url(#pg)"/><path d="M1202.0 311.8V364.3L1203.6 366.1H1204.7L1206.4 364.3V311.8z" fill="url(#pg)"/><path d="M1191.0 309.7V360.9L1192.7 362.7H1193.7L1195.3 360.9V309.7z" fill="url(#pg)"/><path d="M1180.6 307.7V357.8L1182.2 359.5H1183.2L1184.8 357.8V307.7z" fill="url(#pg)"/><path d="M1170.7 305.8V354.7L1172.2 356.4H1173.2L1174.7 354.7V305.8z" fill="url(#pg)"/><path d="M1161.1 304.0V351.8L1162.7 353.5H1163.6L1165.1 351.8V304.0z" fill="url(#pg)"/><path d="M1152.0 302.3V349.1L1153.5 350.7H1154.5L1155.9 349.1V302.3z" fill="url(#pg)"/><path d="M1143.3 300.6V346.4L1144.8 348.0H1145.7L1147.1 346.4V300.6z" fill="url(#pg)"/><path d="M1135.0 299.1V343.9L1136.4 345.4H1137.3L1138.7 343.9V299.1z" fill="url(#pg)"/><path d="M1127.0 297.5V341.4L1128.4 343.0H1129.3L1130.6 341.4V297.5z" fill="url(#pg)"/><path d="M1119.3 296.1V339.1L1120.7 340.6H1121.5L1122.9 339.1V296.1z" fill="url(#pg)"/><path d="M1111.9 294.7V336.8L1113.3 338.3H1114.1L1115.5 336.8V294.7z" fill="url(#pg)"/><path d="M1104.8 293.3V334.7L1106.2 336.1H1107.0L1108.3 334.7V293.3z" fill="url(#pg)"/><path d="M1098.0 292.0V332.6L1099.3 334.0H1100.1L1101.4 332.6V292.0z" fill="url(#pg)"/><path d="M1091.5 290.8V330.6L1092.7 332.0H1093.5L1094.8 330.6V290.8z" fill="url(#pg)"/><path d="M1085.1 289.6V328.6L1086.4 330.0H1087.2L1088.4 328.6V289.6z" fill="url(#pg)"/><path d="M1079.0 288.4V326.8L1080.2 328.1H1081.0L1082.3 326.8V288.4z" fill="url(#pg)"/><path d="M1073.1 287.3V325.0L1074.3 326.3H1075.1L1076.3 325.0V287.3z" fill="url(#pg)"/><path d="M1067.4 286.2V323.2L1068.6 324.6H1069.4L1070.6 323.2V286.2z" fill="url(#pg)"/><path d="M1061.9 285.2V321.6L1063.1 322.9H1063.9L1065.0 321.6V285.2z" fill="url(#pg)"/><path d="M1056.6 284.2V320.0L1057.8 321.2H1058.5L1059.7 320.0V284.2z" fill="url(#pg)"/><path d="M1361.0 343.5V387.8L1362.8 389.8H1363.9L1365.6 387.8V343.5z" fill="url(#pg)"/><path d="M1378.9 335.4V377.2L1380.5 379.0H1381.5L1383.1 377.2V335.4z" fill="url(#pg)"/><path d="M1394.5 328.4V367.9L1396.0 369.6H1396.9L1398.4 367.9V328.4z" fill="url(#pg)"/><path d="M1408.2 322.2V359.8L1409.6 361.3H1410.5L1411.8 359.8V322.2z" fill="url(#pg)"/><path d="M1420.4 316.7V352.5L1421.7 353.9H1422.5L1423.8 352.5V316.7z" fill="url(#pg)"/><path d="M1431.3 311.7V346.0L1432.5 347.3H1433.3L1434.5 346.0V311.7z" fill="url(#pg)"/><path d="M1441.1 307.3V340.1L1442.3 341.4H1443.0L1444.2 340.1V307.3z" fill="url(#pg)"/><path d="M1450.0 303.3V334.8L1451.1 336.0H1451.8L1452.9 334.8V303.3z" fill="url(#pg)"/><path d="M1369.7 339.3V397.0L1371.8 399.3H1373.1L1375.2 397.0V339.3z" fill="url(#pg)"/><path d="M1386.4 331.8V386.1L1388.3 388.3H1389.6L1391.5 386.1V331.8z" fill="url(#pg)"/><path d="M1401.1 325.2V376.6L1402.9 378.6H1404.0L1405.8 376.6V325.2z" fill="url(#pg)"/><path d="M1414.1 319.3V368.1L1415.7 370.0H1416.8L1418.4 368.1V319.3z" fill="url(#pg)"/><path d="M1425.6 314.1V360.6L1427.2 362.3H1428.2L1429.7 360.6V314.1z" fill="url(#pg)"/><path d="M1435.9 309.4V353.8L1437.4 355.5H1438.4L1439.9 353.8V309.4z" fill="url(#pg)"/><path d="M1445.3 305.2V347.7L1446.7 349.3H1447.6L1449.0 347.7V305.2z" fill="url(#pg)"/><path d="M1453.7 301.4V342.2L1455.1 343.7H1455.9L1457.3 342.2V301.4z" fill="url(#pg)"/><path d="M1480.3 284.9V312.7L1481.2 313.7H1481.8L1482.7 312.7V284.9z" fill="url(#pg)"/><path d="M1477.5 284.9V322.6L1478.6 323.9H1479.4L1480.5 322.6V284.9z" fill="url(#pg)"/><path d="M1486.5 283.0V309.1L1487.4 310.1H1488.0L1488.9 309.1V283.0z" fill="url(#pg)"/><path d="M1483.7 283.0V318.3L1484.8 319.6H1485.6L1486.7 318.3V283.0z" fill="url(#pg)"/><path d="M1492.8 281.2V305.5L1493.6 306.5H1494.2L1495.1 305.5V281.2z" fill="url(#pg)"/><path d="M1489.9 281.2V313.9L1491.0 315.2H1491.8L1492.9 313.9V281.2z" fill="url(#pg)"/><path d="M1498.9 279.3V301.9L1499.8 302.9H1500.4L1501.2 301.9V279.3z" fill="url(#pg)"/><path d="M1496.1 279.3V309.6L1497.2 310.9H1498.0L1499.1 309.6V279.3z" fill="url(#pg)"/><path d="M1505.1 277.4V298.3L1506.0 299.3H1506.6L1507.5 298.3V277.4z" fill="url(#pg)"/><path d="M1502.3 277.4V305.3L1503.4 306.5H1504.2L1505.3 305.3V277.4z" fill="url(#pg)"/><path d="M1511.3 275.6V294.7L1512.2 295.7H1512.8L1513.7 294.7V275.6z" fill="url(#pg)"/><path d="M1508.5 275.6V300.9L1509.6 302.2H1510.4L1511.5 300.9V275.6z" fill="url(#pg)"/><path d="M1517.5 273.7V291.1L1518.4 292.1H1519.0L1519.9 291.1V273.7z" fill="url(#pg)"/><path d="M1514.7 273.7V296.6L1515.8 297.8H1516.6L1517.7 296.6V273.7z" fill="url(#pg)"/><path d="M1461.4 290.0V336.7L1462.6 338.0H1463.4L1464.6 336.7V290.0z" fill="url(#pg)"/><path d="M1468.4 290.0V332.5L1469.6 333.8H1470.4L1471.6 332.5V290.0z" fill="url(#pg)"/><path d="M1350.8 340.0V408.8L1353.2 411.5H1354.8L1357.2 408.8V340.0z" fill="url(#pg)"/><polygon points="1262.0,126.9 1393.4,101.1 1393.4,153.5 1353.5,140.0 1262.0,152.8" fill="#d9724a" stroke="#3b1e12" stroke-width="0.6"/><path d="M1262.0 141.6L1393.4 119.6" stroke="#3b1e12" stroke-width="0.6" fill="none"/><path d="M1266.0 126.2L1266.0 152.2" stroke="#3b1e12" stroke-width="0.5" fill="none"/><path d="M1266.0 155.0L1345.0 141.0" stroke="#3b1e12" stroke-width="0.4" fill="none"/><polygon points="1393.4,101.1 1398.1,103.8 1398.1,294.9 1393.4,296.4" fill="#fa8c61" stroke="#3b1e12" stroke-width="0.5"/><polygon points="1398.1,103.8 1511.0,163.8 1511.0,260.3 1398.1,294.9" fill="#fa8c61" stroke="#3b1e12" stroke-width="0.6"/><polygon points="1511.0,189.1 1519.0,191.6 1519.0,257.8 1511.0,260.3" fill="#fa8c61" stroke="#3b1e12" stroke-width="0.5"/><polygon points="1053.0,182.0 1353.5,140.0 1353.5,308.6 1053.0,267.3" fill="#d9724a" stroke="#3b1e12" stroke-width="0.6"/><polygon points="1059.9,181.3 1061.2,181.1 1061.2,212.3 1059.9,212.4" fill="#303435"/><polygon points="1059.9,217.8 1061.2,217.7 1061.2,238.3 1059.9,238.2" fill="#303435"/><polygon points="1059.9,243.7 1061.2,243.8 1061.2,266.8 1059.9,266.7" fill="#303435"/><polygon points="1064.9,180.6 1070.0,179.9 1070.0,194.0 1064.9,194.5" fill="#303435"/><polygon points="1064.9,194.5 1065.7,194.4 1065.7,212.1 1064.9,212.2" fill="#f28e5e"/><polygon points="1065.7,194.4 1070.0,194.0 1070.0,212.0 1065.7,212.1" fill="#1c1e20"/><polygon points="1066.5,195.6 1069.2,195.4 1069.2,198.4 1066.5,198.6" fill="#bdb3ae"/><polygon points="1066.7,200.4 1068.8,200.2 1068.8,209.2 1066.7,209.3" fill="#9a857d"/><polygon points="1066.0,211.1 1069.7,210.9 1069.7,211.8 1066.0,212.0" fill="#5a5d5e"/><polygon points="1064.9,217.6 1070.0,217.5 1070.0,221.3 1064.9,221.3" fill="#303435"/><polygon points="1064.9,221.3 1065.7,221.3 1065.7,238.5 1064.9,238.5" fill="#f28e5e"/><polygon points="1065.7,221.3 1070.0,221.3 1070.0,238.7 1065.7,238.5" fill="#1c1e20"/><polygon points="1066.5,222.5 1069.2,222.5 1069.2,225.4 1066.5,225.4" fill="#bdb3ae"/><polygon points="1066.7,227.2 1068.8,227.2 1068.8,235.8 1066.7,235.8" fill="#9a857d"/><polygon points="1066.0,237.5 1069.7,237.6 1069.7,238.5 1066.0,238.3" fill="#5a5d5e"/><polygon points="1064.9,244.0 1070.0,244.3 1070.0,248.2 1064.9,247.9" fill="#303435"/><polygon points="1064.9,247.9 1065.7,247.9 1065.7,267.4 1064.9,267.3" fill="#f28e5e"/><polygon points="1065.7,247.9 1070.0,248.2 1070.0,268.0 1065.7,267.4" fill="#1c1e20"/><polygon points="1066.5,249.3 1069.2,249.6 1069.2,252.9 1066.5,252.7" fill="#bdb3ae"/><polygon points="1066.7,254.6 1068.8,254.8 1068.8,264.7 1066.7,264.4" fill="#9a857d"/><polygon points="1066.0,266.3 1069.7,266.8 1069.7,267.8 1066.0,267.3" fill="#5a5d5e"/><polygon points="1070.0,179.9 1070.9,179.7 1070.9,269.8 1070.0,269.7" fill="#b9552f"/><polygon points="1073.7,179.4 1075.2,179.1 1075.2,211.8 1073.7,211.8" fill="#303435"/><polygon points="1073.7,217.4 1075.2,217.4 1075.2,238.9 1073.7,238.8" fill="#303435"/><polygon points="1073.7,244.6 1075.2,244.6 1075.2,268.7 1073.7,268.5" fill="#303435"/><polygon points="1079.6,178.5 1084.8,177.8 1084.8,192.6 1079.6,193.1" fill="#303435"/><polygon points="1079.6,193.1 1080.4,193.0 1080.4,211.6 1079.6,211.6" fill="#f28e5e"/><polygon points="1080.4,193.0 1084.8,192.6 1084.8,211.4 1080.4,211.6" fill="#1c1e20"/><polygon points="1081.2,194.3 1084.0,194.0 1084.0,197.2 1081.2,197.4" fill="#bdb3ae"/><polygon points="1081.4,199.3 1083.6,199.1 1083.6,208.4 1081.4,208.5" fill="#9a857d"/><polygon points="1080.7,210.4 1084.5,210.3 1084.5,211.2 1080.7,211.4" fill="#5a5d5e"/><polygon points="1079.6,217.3 1084.8,217.2 1084.8,221.1 1079.6,221.2" fill="#303435"/><polygon points="1079.6,221.2 1080.4,221.1 1080.4,239.1 1079.6,239.1" fill="#f28e5e"/><polygon points="1080.4,221.1 1084.8,221.1 1084.8,239.3 1080.4,239.1" fill="#1c1e20"/><polygon points="1081.2,222.4 1084.0,222.4 1084.0,225.5 1081.2,225.5" fill="#bdb3ae"/><polygon points="1081.4,227.3 1083.6,227.3 1083.6,236.3 1081.4,236.3" fill="#9a857d"/><polygon points="1080.7,238.0 1084.5,238.2 1084.5,239.1 1080.7,238.9" fill="#5a5d5e"/><polygon points="1079.6,244.9 1084.8,245.2 1084.8,249.3 1079.6,248.9" fill="#303435"/><polygon points="1079.6,248.9 1080.4,249.0 1080.4,269.4 1079.6,269.3" fill="#f28e5e"/><polygon points="1080.4,249.0 1084.8,249.3 1084.8,270.0 1080.4,269.4" fill="#1c1e20"/><polygon points="1081.2,250.5 1084.0,250.7 1084.0,254.2 1081.2,253.9" fill="#bdb3ae"/><polygon points="1081.4,256.0 1083.6,256.2 1083.6,266.5 1081.4,266.2" fill="#9a857d"/><polygon points="1080.7,268.2 1084.5,268.7 1084.5,269.7 1080.7,269.2" fill="#5a5d5e"/><polygon points="1084.8,177.8 1085.7,177.7 1085.7,271.8 1084.8,271.7" fill="#b9552f"/><polygon points="1090.7,177.0 1092.9,176.7 1092.9,211.0 1090.7,211.1" fill="#303435"/><polygon points="1090.7,217.0 1092.9,217.0 1092.9,239.6 1090.7,239.5" fill="#303435"/><polygon points="1090.7,245.6 1092.9,245.7 1092.9,271.0 1090.7,270.7" fill="#303435"/><polygon points="1097.3,176.1 1099.5,175.8 1099.5,210.8 1097.3,210.9" fill="#303435"/><polygon points="1097.3,216.9 1099.5,216.8 1099.5,239.9 1097.3,239.8" fill="#303435"/><polygon points="1097.3,246.0 1099.5,246.1 1099.5,271.9 1097.3,271.6" fill="#303435"/><polygon points="1104.0,175.1 1110.6,174.2 1110.6,190.2 1104.0,190.8" fill="#303435"/><polygon points="1104.0,190.8 1105.0,190.7 1105.0,210.6 1104.0,210.6" fill="#f28e5e"/><polygon points="1105.0,190.7 1110.6,190.2 1110.6,210.3 1105.0,210.6" fill="#1c1e20"/><polygon points="1105.9,192.0 1109.7,191.6 1109.7,195.1 1105.9,195.4" fill="#bdb3ae"/><polygon points="1106.4,197.5 1106.9,197.5 1106.9,207.1 1106.4,207.1" fill="#9a857d"/><polygon points="1108.7,197.4 1109.2,197.3 1109.2,207.0 1108.7,207.0" fill="#9a857d"/><polygon points="1105.3,209.4 1110.3,209.1 1110.3,210.2 1105.3,210.4" fill="#5a5d5e"/><polygon points="1104.0,216.7 1110.6,216.6 1110.6,220.8 1104.0,220.9" fill="#303435"/><polygon points="1104.0,220.9 1105.0,220.9 1105.0,240.1 1104.0,240.1" fill="#f28e5e"/><polygon points="1105.0,220.9 1110.6,220.8 1110.6,240.4 1105.0,240.1" fill="#1c1e20"/><polygon points="1105.9,222.2 1109.7,222.2 1109.7,225.5 1105.9,225.5" fill="#bdb3ae"/><polygon points="1106.4,227.6 1106.9,227.6 1106.9,236.9 1106.4,236.9" fill="#9a857d"/><polygon points="1108.7,227.6 1109.2,227.6 1109.2,237.0 1108.7,237.0" fill="#9a857d"/><polygon points="1105.3,239.0 1110.3,239.2 1110.3,240.2 1105.3,240.0" fill="#5a5d5e"/><polygon points="1104.0,246.4 1110.6,246.7 1110.6,251.1 1104.0,250.7" fill="#303435"/><polygon points="1104.0,250.7 1105.0,250.7 1105.0,272.6 1104.0,272.5" fill="#f28e5e"/><polygon points="1105.0,250.7 1110.6,251.1 1110.6,273.4 1105.0,272.6" fill="#1c1e20"/><polygon points="1105.9,252.3 1109.7,252.6 1109.7,256.4 1105.9,256.1" fill="#bdb3ae"/><polygon points="1106.4,258.5 1106.9,258.6 1106.9,269.1 1106.4,269.1" fill="#9a857d"/><polygon points="1108.7,258.7 1109.2,258.8 1109.2,269.4 1108.7,269.4" fill="#9a857d"/><polygon points="1105.3,271.3 1110.3,272.0 1110.3,273.1 1105.3,272.4" fill="#5a5d5e"/><polygon points="1110.6,174.2 1111.8,174.1 1111.8,275.4 1110.6,275.2" fill="#b9552f"/><polygon points="1118.7,173.1 1126.8,172.0 1126.8,188.6 1118.7,189.4" fill="#303435"/><polygon points="1118.7,189.4 1119.9,189.3 1119.9,210.0 1118.7,210.0" fill="#f28e5e"/><polygon points="1119.9,189.3 1126.8,188.6 1126.8,209.7 1119.9,210.0" fill="#1c1e20"/><polygon points="1121.0,190.6 1125.7,190.2 1125.7,193.8 1121.0,194.1" fill="#bdb3ae"/><polygon points="1121.5,196.4 1122.5,196.3 1122.5,206.3 1121.5,206.4" fill="#9a857d"/><polygon points="1124.3,196.2 1125.2,196.1 1125.2,206.2 1124.3,206.2" fill="#9a857d"/><polygon points="1120.2,208.7 1126.5,208.4 1126.5,209.5 1120.2,209.7" fill="#5a5d5e"/><polygon points="1118.7,216.4 1126.8,216.2 1126.8,220.6 1118.7,220.7" fill="#303435"/><polygon points="1118.7,220.7 1119.9,220.7 1119.9,240.8 1118.7,240.7" fill="#f28e5e"/><polygon points="1119.9,220.7 1126.8,220.6 1126.8,241.1 1119.9,240.8" fill="#1c1e20"/><polygon points="1121.0,222.1 1125.7,222.0 1125.7,225.5 1121.0,225.5" fill="#bdb3ae"/><polygon points="1121.5,227.7 1122.5,227.7 1122.5,237.4 1121.5,237.4" fill="#9a857d"/><polygon points="1124.3,227.7 1125.2,227.8 1125.2,237.5 1124.3,237.5" fill="#9a857d"/><polygon points="1120.2,239.6 1126.5,239.8 1126.5,240.8 1120.2,240.6" fill="#5a5d5e"/><polygon points="1118.7,247.2 1126.8,247.7 1126.8,252.3 1118.7,251.7" fill="#303435"/><polygon points="1118.7,251.7 1119.9,251.8 1119.9,274.6 1118.7,274.4" fill="#f28e5e"/><polygon points="1119.9,251.8 1126.8,252.3 1126.8,275.5 1119.9,274.6" fill="#1c1e20"/><polygon points="1121.0,253.5 1125.7,253.8 1125.7,257.8 1121.0,257.4" fill="#bdb3ae"/><polygon points="1121.5,259.9 1122.5,260.0 1122.5,271.0 1121.5,270.9" fill="#9a857d"/><polygon points="1124.3,260.2 1125.2,260.3 1125.2,271.4 1124.3,271.3" fill="#9a857d"/><polygon points="1120.2,273.3 1126.5,274.1 1126.5,275.2 1120.2,274.4" fill="#5a5d5e"/><polygon points="1126.8,172.0 1128.3,171.8 1128.3,277.7 1126.8,277.5" fill="#b9552f"/><polygon points="1131.2,171.4 1139.4,170.2 1139.4,187.4 1131.2,188.2" fill="#303435"/><polygon points="1131.2,188.2 1132.4,188.1 1132.4,209.5 1131.2,209.5" fill="#f28e5e"/><polygon points="1132.4,188.1 1139.4,187.4 1139.4,209.2 1132.4,209.5" fill="#1c1e20"/><polygon points="1133.5,189.5 1138.3,189.0 1138.3,192.7 1133.5,193.1" fill="#bdb3ae"/><polygon points="1134.0,195.4 1135.0,195.4 1135.0,205.7 1134.0,205.7" fill="#9a857d"/><polygon points="1136.8,195.2 1137.8,195.2 1137.8,205.6 1136.8,205.6" fill="#9a857d"/><polygon points="1132.7,208.2 1139.1,207.9 1139.1,209.0 1132.7,209.2" fill="#5a5d5e"/><polygon points="1131.2,216.1 1139.4,215.9 1139.4,220.5 1131.2,220.6" fill="#303435"/><polygon points="1131.2,220.6 1132.4,220.5 1132.4,241.3 1131.2,241.2" fill="#f28e5e"/><polygon points="1132.4,220.5 1139.4,220.5 1139.4,241.6 1132.4,241.3" fill="#1c1e20"/><polygon points="1133.5,222.0 1138.3,222.0 1138.3,225.5 1133.5,225.5" fill="#bdb3ae"/><polygon points="1134.0,227.8 1135.0,227.8 1135.0,237.9 1134.0,237.8" fill="#9a857d"/><polygon points="1136.8,227.8 1137.8,227.8 1137.8,237.9 1136.8,237.9" fill="#9a857d"/><polygon points="1132.7,240.1 1139.1,240.3 1139.1,241.4 1132.7,241.1" fill="#5a5d5e"/><polygon points="1131.2,248.0 1139.4,248.5 1139.4,253.2 1131.2,252.6" fill="#303435"/><polygon points="1131.2,252.6 1132.4,252.7 1132.4,276.3 1131.2,276.1" fill="#f28e5e"/><polygon points="1132.4,252.7 1139.4,253.2 1139.4,277.2 1132.4,276.3" fill="#1c1e20"/><polygon points="1133.5,254.4 1138.3,254.8 1138.3,258.9 1133.5,258.4" fill="#bdb3ae"/><polygon points="1134.0,261.1 1135.0,261.2 1135.0,272.6 1134.0,272.4" fill="#9a857d"/><polygon points="1136.8,261.3 1137.8,261.4 1137.8,272.9 1136.8,272.8" fill="#9a857d"/><polygon points="1132.7,274.9 1139.1,275.7 1139.1,276.9 1132.7,276.1" fill="#5a5d5e"/><polygon points="1139.4,170.2 1140.9,170.0 1140.9,279.4 1139.4,279.2" fill="#b9552f"/><polygon points="1144.5,169.5 1153.4,168.3 1153.4,186.1 1144.5,186.9" fill="#303435"/><polygon points="1144.5,186.9 1145.8,186.8 1145.8,208.9 1144.5,209.0" fill="#f28e5e"/><polygon points="1145.8,186.8 1153.4,186.1 1153.4,208.6 1145.8,208.9" fill="#1c1e20"/><polygon points="1147.0,188.2 1152.2,187.8 1152.2,191.6 1147.0,192.0" fill="#bdb3ae"/><polygon points="1147.5,194.4 1148.7,194.3 1148.7,205.0 1147.5,205.1" fill="#9a857d"/><polygon points="1150.6,194.2 1151.7,194.1 1151.7,204.9 1150.6,204.9" fill="#9a857d"/><polygon points="1146.1,207.6 1153.1,207.3 1153.1,208.4 1146.1,208.7" fill="#5a5d5e"/><polygon points="1144.5,215.8 1153.4,215.6 1153.4,220.3 1144.5,220.4" fill="#303435"/><polygon points="1144.5,220.4 1145.8,220.4 1145.8,241.9 1144.5,241.8" fill="#f28e5e"/><polygon points="1145.8,220.4 1153.4,220.3 1153.4,242.2 1145.8,241.9" fill="#1c1e20"/><polygon points="1147.0,221.9 1152.2,221.8 1152.2,225.6 1147.0,225.5" fill="#bdb3ae"/><polygon points="1147.5,227.9 1148.7,227.9 1148.7,238.3 1147.5,238.3" fill="#9a857d"/><polygon points="1150.6,227.9 1151.7,227.9 1151.7,238.4 1150.6,238.4" fill="#9a857d"/><polygon points="1146.1,240.6 1153.1,240.9 1153.1,242.0 1146.1,241.7" fill="#5a5d5e"/><polygon points="1144.5,248.8 1153.4,249.3 1153.4,254.2 1144.5,253.6" fill="#303435"/><polygon points="1144.5,253.6 1145.8,253.7 1145.8,278.0 1144.5,277.9" fill="#f28e5e"/><polygon points="1145.8,253.7 1153.4,254.2 1153.4,279.0 1145.8,278.0" fill="#1c1e20"/><polygon points="1147.0,255.5 1152.2,255.8 1152.2,260.1 1147.0,259.6" fill="#bdb3ae"/><polygon points="1147.5,262.3 1148.7,262.4 1148.7,274.2 1147.5,274.1" fill="#9a857d"/><polygon points="1150.6,262.6 1151.7,262.7 1151.7,274.6 1150.6,274.5" fill="#9a857d"/><polygon points="1146.1,276.6 1153.1,277.5 1153.1,278.7 1146.1,277.8" fill="#5a5d5e"/><polygon points="1153.4,168.3 1155.0,168.1 1155.0,281.3 1153.4,281.1" fill="#b9552f"/><polygon points="1158.0,167.6 1167.7,166.3 1167.7,184.7 1158.0,185.6" fill="#303435"/><polygon points="1158.0,185.6 1159.5,185.5 1159.5,208.4 1158.0,208.4" fill="#f28e5e"/><polygon points="1159.5,185.5 1167.7,184.7 1167.7,208.1 1159.5,208.4" fill="#1c1e20"/><polygon points="1160.8,187.0 1166.4,186.5 1166.4,190.4 1160.8,190.9" fill="#bdb3ae"/><polygon points="1161.3,193.4 1162.6,193.3 1162.6,204.3 1161.3,204.4" fill="#9a857d"/><polygon points="1164.6,193.1 1165.9,193.0 1165.9,204.2 1164.6,204.2" fill="#9a857d"/><polygon points="1159.8,207.0 1167.4,206.7 1167.4,207.8 1159.8,208.1" fill="#5a5d5e"/><polygon points="1158.0,215.5 1167.7,215.3 1167.7,220.1 1158.0,220.2" fill="#303435"/><polygon points="1158.0,220.2 1159.5,220.2 1159.5,242.4 1158.0,242.4" fill="#f28e5e"/><polygon points="1159.5,220.2 1167.7,220.1 1167.7,242.8 1159.5,242.4" fill="#1c1e20"/><polygon points="1160.8,221.8 1166.4,221.7 1166.4,225.6 1160.8,225.6" fill="#bdb3ae"/><polygon points="1161.3,228.0 1162.6,228.0 1162.6,238.8 1161.3,238.7" fill="#9a857d"/><polygon points="1164.6,228.0 1165.9,228.1 1165.9,238.9 1164.6,238.8" fill="#9a857d"/><polygon points="1159.8,241.1 1167.4,241.4 1167.4,242.5 1159.8,242.2" fill="#5a5d5e"/><polygon points="1158.0,249.6 1167.7,250.1 1167.7,255.2 1158.0,254.5" fill="#303435"/><polygon points="1158.0,254.5 1159.5,254.6 1159.5,279.8 1158.0,279.6" fill="#f28e5e"/><polygon points="1159.5,254.6 1167.7,255.2 1167.7,280.9 1159.5,279.8" fill="#1c1e20"/><polygon points="1160.8,256.5 1166.4,256.9 1166.4,261.3 1160.8,260.8" fill="#bdb3ae"/><polygon points="1161.3,263.6 1162.6,263.7 1162.6,275.9 1161.3,275.8" fill="#9a857d"/><polygon points="1164.6,263.9 1165.9,264.0 1165.9,276.3 1164.6,276.2" fill="#9a857d"/><polygon points="1159.8,278.4 1167.4,279.3 1167.4,280.6 1159.8,279.6" fill="#5a5d5e"/><polygon points="1167.7,166.3 1169.3,166.1 1169.3,283.3 1167.7,283.1" fill="#b9552f"/><polygon points="1172.9,165.6 1177.3,165.0 1177.3,183.8 1172.9,184.2" fill="#303435"/><polygon points="1172.9,184.2 1173.6,184.2 1173.6,207.8 1172.9,207.8" fill="#f28e5e"/><polygon points="1173.6,184.2 1177.3,183.8 1177.3,207.7 1173.6,207.8" fill="#1c1e20"/><polygon points="1174.4,185.7 1176.5,185.5 1176.5,189.6 1174.4,189.8" fill="#bdb3ae"/><polygon points="1174.6,192.1 1176.1,192.0 1176.1,203.9 1174.6,204.0" fill="#9a857d"/><polygon points="1173.9,206.4 1177.0,206.2 1177.0,207.4 1173.9,207.6" fill="#5a5d5e"/><polygon points="1172.9,215.2 1177.3,215.1 1177.3,220.0 1172.9,220.1" fill="#303435"/><polygon points="1172.9,220.1 1173.6,220.1 1173.6,243.0 1172.9,243.0" fill="#f28e5e"/><polygon points="1173.6,220.1 1177.3,220.0 1177.3,243.2 1173.6,243.0" fill="#1c1e20"/><polygon points="1174.4,221.7 1176.5,221.7 1176.5,225.6 1174.4,225.6" fill="#bdb3ae"/><polygon points="1174.6,227.9 1176.1,227.9 1176.1,239.4 1174.6,239.4" fill="#9a857d"/><polygon points="1173.9,241.7 1177.0,241.8 1177.0,242.9 1173.9,242.8" fill="#5a5d5e"/><polygon points="1172.9,250.5 1177.3,250.7 1177.3,255.9 1172.9,255.6" fill="#303435"/><polygon points="1172.9,255.6 1173.6,255.6 1173.6,281.7 1172.9,281.6" fill="#f28e5e"/><polygon points="1173.6,255.6 1177.3,255.9 1177.3,282.2 1173.6,281.7" fill="#1c1e20"/><polygon points="1174.4,257.5 1176.5,257.7 1176.5,262.1 1174.4,262.0" fill="#bdb3ae"/><polygon points="1174.6,264.6 1176.1,264.7 1176.1,277.8 1174.6,277.6" fill="#9a857d"/><polygon points="1173.9,280.2 1177.0,280.6 1177.0,281.9 1173.9,281.5" fill="#5a5d5e"/><polygon points="1177.3,165.0 1178.1,164.9 1178.1,284.5 1177.3,284.4" fill="#b9552f"/><polygon points="1185.4,163.8 1200.9,161.7 1200.9,181.5 1185.4,183.0" fill="#303435"/><polygon points="1185.4,183.0 1187.3,182.8 1187.3,207.3 1185.4,207.3" fill="#f28e5e"/><polygon points="1187.3,182.8 1200.9,181.5 1200.9,206.7 1187.3,207.3" fill="#1c1e20"/><polygon points="1189.3,184.4 1198.9,183.5 1198.9,187.8 1189.3,188.5" fill="#bdb3ae"/><polygon points="1189.8,191.2 1192.5,191.0 1192.5,202.9 1189.8,203.0" fill="#9a857d"/><polygon points="1195.7,190.8 1198.4,190.5 1198.4,202.6 1195.7,202.7" fill="#9a857d"/><polygon points="1187.6,205.8 1200.6,205.2 1200.6,206.5 1187.6,207.0" fill="#5a5d5e"/><polygon points="1185.4,214.9 1200.9,214.5 1200.9,219.8 1185.4,219.9" fill="#303435"/><polygon points="1185.4,219.9 1187.3,219.9 1187.3,243.6 1185.4,243.5" fill="#f28e5e"/><polygon points="1187.3,219.9 1200.9,219.8 1200.9,244.2 1187.3,243.6" fill="#1c1e20"/><polygon points="1189.3,221.6 1198.9,221.5 1198.9,225.6 1189.3,225.6" fill="#bdb3ae"/><polygon points="1189.8,228.2 1192.5,228.2 1192.5,239.8 1189.8,239.7" fill="#9a857d"/><polygon points="1195.7,228.3 1198.4,228.3 1198.4,239.9 1195.7,239.9" fill="#9a857d"/><polygon points="1187.6,242.2 1200.6,242.7 1200.6,243.9 1187.6,243.4" fill="#5a5d5e"/><polygon points="1185.4,251.2 1200.9,252.1 1200.9,257.6 1185.4,256.5" fill="#303435"/><polygon points="1185.4,256.5 1187.3,256.6 1187.3,283.5 1185.4,283.3" fill="#f28e5e"/><polygon points="1187.3,256.6 1200.9,257.6 1200.9,285.3 1187.3,283.5" fill="#1c1e20"/><polygon points="1189.3,258.7 1198.9,259.4 1198.9,264.1 1189.3,263.2" fill="#bdb3ae"/><polygon points="1189.8,266.3 1192.5,266.5 1192.5,279.6 1189.8,279.2" fill="#9a857d"/><polygon points="1195.7,266.8 1198.4,267.1 1198.4,280.3 1195.7,280.0" fill="#9a857d"/><polygon points="1187.6,281.9 1200.6,283.6 1200.6,285.0 1187.6,283.3" fill="#5a5d5e"/><polygon points="1200.9,161.7 1202.5,161.5 1202.5,287.9 1200.9,287.6" fill="#b9552f"/><polygon points="1205.7,161.0 1219.0,159.2 1219.0,179.8 1205.7,181.1" fill="#303435"/><polygon points="1205.7,181.1 1207.6,180.9 1207.6,206.5 1205.7,206.5" fill="#f28e5e"/><polygon points="1207.6,180.9 1219.0,179.8 1219.0,206.0 1207.6,206.5" fill="#1c1e20"/><polygon points="1209.4,182.5 1217.2,181.8 1217.2,186.3 1209.4,186.9" fill="#bdb3ae"/><polygon points="1209.9,189.7 1212.0,189.5 1212.0,201.9 1209.9,202.0" fill="#9a857d"/><polygon points="1214.6,189.3 1216.7,189.2 1216.7,201.7 1214.6,201.8" fill="#9a857d"/><polygon points="1207.9,204.9 1218.7,204.4 1218.7,205.7 1207.9,206.2" fill="#5a5d5e"/><polygon points="1205.7,214.4 1219.0,214.1 1219.0,219.5 1205.7,219.7" fill="#303435"/><polygon points="1205.7,219.7 1207.6,219.7 1207.6,244.5 1205.7,244.4" fill="#f28e5e"/><polygon points="1207.6,219.7 1219.0,219.5 1219.0,244.9 1207.6,244.5" fill="#1c1e20"/><polygon points="1209.4,221.4 1217.2,221.3 1217.2,225.6 1209.4,225.6" fill="#bdb3ae"/><polygon points="1209.9,228.4 1212.0,228.4 1212.0,240.4 1209.9,240.3" fill="#9a857d"/><polygon points="1214.6,228.4 1216.7,228.4 1216.7,240.5 1214.6,240.5" fill="#9a857d"/><polygon points="1207.9,243.0 1218.7,243.4 1218.7,244.7 1207.9,244.2" fill="#5a5d5e"/><polygon points="1205.7,252.4 1219.0,253.2 1219.0,258.9 1205.7,257.9" fill="#303435"/><polygon points="1205.7,257.9 1207.6,258.1 1207.6,286.2 1205.7,285.9" fill="#f28e5e"/><polygon points="1207.6,258.1 1219.0,258.9 1219.0,287.7 1207.6,286.2" fill="#1c1e20"/><polygon points="1209.4,260.2 1217.2,260.8 1217.2,265.6 1209.4,265.0" fill="#bdb3ae"/><polygon points="1209.9,268.1 1212.0,268.3 1212.0,281.9 1209.9,281.7" fill="#9a857d"/><polygon points="1214.6,268.6 1216.7,268.8 1216.7,282.5 1214.6,282.3" fill="#9a857d"/><polygon points="1207.9,284.5 1218.7,285.9 1218.7,287.4 1207.9,286.0" fill="#5a5d5e"/><polygon points="1219.0,159.2 1220.6,159.0 1220.6,290.3 1219.0,290.1" fill="#b9552f"/><polygon points="1224.5,158.4 1238.5,156.5 1238.5,178.0 1224.5,179.3" fill="#303435"/><polygon points="1224.5,179.3 1226.4,179.1 1226.4,205.7 1224.5,205.8" fill="#f28e5e"/><polygon points="1226.4,179.1 1238.5,178.0 1238.5,205.2 1226.4,205.7" fill="#1c1e20"/><polygon points="1228.3,180.8 1236.6,180.0 1236.6,184.7 1228.3,185.3" fill="#bdb3ae"/><polygon points="1228.8,188.2 1231.0,188.1 1231.0,200.9 1228.8,201.1" fill="#9a857d"/><polygon points="1233.9,187.9 1236.1,187.7 1236.1,200.7 1233.9,200.8" fill="#9a857d"/><polygon points="1226.7,204.1 1238.2,203.6 1238.2,205.0 1226.7,205.4" fill="#5a5d5e"/><polygon points="1224.5,214.0 1238.5,213.6 1238.5,219.3 1224.5,219.5" fill="#303435"/><polygon points="1224.5,219.5 1226.4,219.5 1226.4,245.3 1224.5,245.2" fill="#f28e5e"/><polygon points="1226.4,219.5 1238.5,219.3 1238.5,245.8 1226.4,245.3" fill="#1c1e20"/><polygon points="1228.3,221.3 1236.6,221.2 1236.6,225.7 1228.3,225.7" fill="#bdb3ae"/><polygon points="1228.8,228.5 1231.0,228.5 1231.0,241.0 1228.8,240.9" fill="#9a857d"/><polygon points="1233.9,228.5 1236.1,228.6 1236.1,241.2 1233.9,241.1" fill="#9a857d"/><polygon points="1226.7,243.7 1238.2,244.2 1238.2,245.5 1226.7,245.0" fill="#5a5d5e"/><polygon points="1224.5,253.5 1238.5,254.4 1238.5,260.3 1224.5,259.3" fill="#303435"/><polygon points="1224.5,259.3 1226.4,259.4 1226.4,288.7 1224.5,288.4" fill="#f28e5e"/><polygon points="1226.4,259.4 1238.5,260.3 1238.5,290.3 1226.4,288.7" fill="#1c1e20"/><polygon points="1228.3,261.6 1236.6,262.2 1236.6,267.3 1228.3,266.6" fill="#bdb3ae"/><polygon points="1228.8,269.9 1231.0,270.1 1231.0,284.3 1228.8,284.0" fill="#9a857d"/><polygon points="1233.9,270.4 1236.1,270.6 1236.1,284.9 1233.9,284.6" fill="#9a857d"/><polygon points="1226.7,287.0 1238.2,288.4 1238.2,289.9 1226.7,288.4" fill="#5a5d5e"/><polygon points="1238.5,156.5 1240.1,156.2 1240.1,293.0 1238.5,292.8" fill="#b9552f"/><polygon points="1244.3,155.7 1252.5,154.5 1252.5,176.6 1244.3,177.4" fill="#303435"/><polygon points="1244.3,177.4 1245.5,177.3 1245.5,204.9 1244.3,205.0" fill="#f28e5e"/><polygon points="1245.5,177.3 1252.5,176.6 1252.5,204.6 1245.5,204.9" fill="#1c1e20"/><polygon points="1246.6,179.1 1251.4,178.7 1251.4,183.4 1246.6,183.8" fill="#bdb3ae"/><polygon points="1247.1,186.8 1248.1,186.8 1248.1,200.1 1247.1,200.2" fill="#9a857d"/><polygon points="1249.9,186.6 1250.9,186.6 1250.9,200.0 1249.9,200.0" fill="#9a857d"/><polygon points="1245.8,203.3 1252.2,203.0 1252.2,204.4 1245.8,204.6" fill="#5a5d5e"/><polygon points="1244.3,213.5 1252.5,213.3 1252.5,219.2 1244.3,219.3" fill="#303435"/><polygon points="1244.3,219.3 1245.5,219.2 1245.5,246.1 1244.3,246.0" fill="#f28e5e"/><polygon points="1245.5,219.2 1252.5,219.2 1252.5,246.4 1245.5,246.1" fill="#1c1e20"/><polygon points="1246.6,221.1 1251.4,221.1 1251.4,225.7 1246.6,225.7" fill="#bdb3ae"/><polygon points="1247.1,228.6 1248.1,228.6 1248.1,241.6 1247.1,241.6" fill="#9a857d"/><polygon points="1249.9,228.7 1250.9,228.7 1250.9,241.7 1249.9,241.6" fill="#9a857d"/><polygon points="1245.8,244.5 1252.2,244.7 1252.2,246.1 1245.8,245.8" fill="#5a5d5e"/><polygon points="1244.3,254.7 1252.5,255.2 1252.5,261.3 1244.3,260.7" fill="#303435"/><polygon points="1244.3,260.7 1245.5,260.8 1245.5,291.2 1244.3,291.1" fill="#f28e5e"/><polygon points="1245.5,260.8 1252.5,261.3 1252.5,292.1 1245.5,291.2" fill="#1c1e20"/><polygon points="1246.6,263.0 1251.4,263.4 1251.4,268.6 1246.6,268.2" fill="#bdb3ae"/><polygon points="1247.1,271.6 1248.1,271.7 1248.1,286.4 1247.1,286.2" fill="#9a857d"/><polygon points="1249.9,271.8 1250.9,271.9 1250.9,286.7 1249.9,286.6" fill="#9a857d"/><polygon points="1245.8,289.4 1252.2,290.2 1252.2,291.8 1245.8,291.0" fill="#5a5d5e"/><polygon points="1252.5,154.5 1254.0,154.3 1254.0,294.9 1252.5,294.7" fill="#b9552f"/><polygon points="1259.1,153.6 1275.6,151.3 1275.6,174.4 1259.1,176.0" fill="#303435"/><polygon points="1259.1,176.0 1261.0,175.8 1261.0,204.3 1259.1,204.4" fill="#f28e5e"/><polygon points="1261.0,175.8 1275.6,174.4 1275.6,203.7 1261.0,204.3" fill="#1c1e20"/><polygon points="1263.0,177.6 1273.6,176.7 1273.6,181.6 1263.0,182.5" fill="#bdb3ae"/><polygon points="1263.5,185.6 1266.6,185.4 1266.6,199.2 1263.5,199.3" fill="#9a857d"/><polygon points="1270.0,185.1 1273.1,184.9 1273.1,198.9 1270.0,199.0" fill="#9a857d"/><polygon points="1261.3,202.6 1275.3,202.0 1275.3,203.4 1261.3,204.0" fill="#5a5d5e"/><polygon points="1259.1,213.2 1275.6,212.8 1275.6,218.9 1259.1,219.1" fill="#303435"/><polygon points="1259.1,219.1 1261.0,219.1 1261.0,246.7 1259.1,246.6" fill="#f28e5e"/><polygon points="1261.0,219.1 1275.6,218.9 1275.6,247.3 1261.0,246.7" fill="#1c1e20"/><polygon points="1263.0,221.0 1273.6,220.9 1273.6,225.7 1263.0,225.7" fill="#bdb3ae"/><polygon points="1263.5,228.8 1266.6,228.8 1266.6,242.2 1263.5,242.1" fill="#9a857d"/><polygon points="1270.0,228.8 1273.1,228.8 1273.1,242.4 1270.0,242.3" fill="#9a857d"/><polygon points="1261.3,245.1 1275.3,245.6 1275.3,247.0 1261.3,246.4" fill="#5a5d5e"/><polygon points="1259.1,255.6 1275.6,256.6 1275.6,297.9 1259.1,295.6" fill="#303435"/><polygon points="1275.6,151.3 1277.2,151.1 1277.2,298.1 1275.6,297.9" fill="#b9552f"/><polygon points="1296.4,148.4 1314.1,146.0 1314.1,170.8 1296.4,172.4" fill="#303435"/><polygon points="1296.4,172.4 1298.3,172.3 1298.3,202.8 1296.4,202.9" fill="#f28e5e"/><polygon points="1298.3,172.3 1314.1,170.8 1314.1,202.2 1298.3,202.8" fill="#1c1e20"/><polygon points="1300.3,174.2 1312.1,173.1 1312.1,178.5 1300.3,179.4" fill="#bdb3ae"/><polygon points="1300.8,182.8 1304.4,182.5 1304.4,197.3 1300.8,197.5" fill="#9a857d"/><polygon points="1308.0,182.2 1311.6,181.9 1311.6,197.0 1308.0,197.1" fill="#9a857d"/><polygon points="1298.6,201.0 1313.8,200.3 1313.8,201.9 1298.6,202.5" fill="#5a5d5e"/><polygon points="1296.4,212.3 1314.1,211.9 1314.1,218.5 1296.4,218.7" fill="#303435"/><polygon points="1296.4,218.7 1298.3,218.6 1298.3,248.3 1296.4,248.2" fill="#f28e5e"/><polygon points="1298.3,218.6 1314.1,218.5 1314.1,248.9 1298.3,248.3" fill="#1c1e20"/><polygon points="1300.3,220.7 1312.1,220.6 1312.1,225.8 1300.3,225.8" fill="#bdb3ae"/><polygon points="1300.8,229.0 1304.4,229.1 1304.4,243.4 1300.8,243.3" fill="#9a857d"/><polygon points="1308.0,229.1 1311.6,229.1 1311.6,243.7 1308.0,243.6" fill="#9a857d"/><polygon points="1298.6,246.5 1313.8,247.1 1313.8,248.6 1298.6,248.0" fill="#5a5d5e"/><polygon points="1296.4,257.8 1314.1,258.9 1314.1,265.7 1296.4,264.4" fill="#303435"/><polygon points="1296.4,264.4 1298.3,264.6 1298.3,298.2 1296.4,297.9" fill="#f28e5e"/><polygon points="1298.3,264.6 1314.1,265.7 1314.1,300.3 1298.3,298.2" fill="#1c1e20"/><polygon points="1300.3,267.1 1312.1,268.0 1312.1,273.8 1300.3,272.8" fill="#bdb3ae"/><polygon points="1300.8,276.6 1304.4,276.9 1304.4,293.2 1300.8,292.8" fill="#9a857d"/><polygon points="1308.0,277.2 1311.6,277.6 1311.6,294.1 1308.0,293.7" fill="#9a857d"/><polygon points="1298.6,296.2 1313.8,298.2 1313.8,299.9 1298.6,297.9" fill="#5a5d5e"/><polygon points="1314.1,146.0 1315.7,145.7 1315.7,303.4 1314.1,303.2" fill="#b9552f"/><polygon points="1323.0,144.7 1332.3,143.4 1332.3,169.0 1323.0,169.9" fill="#303435"/><polygon points="1323.0,169.9 1324.4,169.8 1324.4,201.8 1323.0,201.8" fill="#f28e5e"/><polygon points="1324.4,169.8 1332.3,169.0 1332.3,201.5 1324.4,201.8" fill="#1c1e20"/><polygon points="1325.7,171.9 1331.0,171.4 1331.0,176.9 1325.7,177.3" fill="#bdb3ae"/><polygon points="1326.2,180.8 1327.4,180.7 1327.4,196.2 1326.2,196.2" fill="#9a857d"/><polygon points="1329.3,180.6 1330.5,180.5 1330.5,196.0 1329.3,196.1" fill="#9a857d"/><polygon points="1324.7,199.8 1332.0,199.5 1332.0,201.1 1324.7,201.4" fill="#5a5d5e"/><polygon points="1323.0,211.7 1332.3,211.5 1332.3,218.2 1323.0,218.4" fill="#303435"/><polygon points="1323.0,218.4 1324.4,218.3 1324.4,249.4 1323.0,249.3" fill="#f28e5e"/><polygon points="1324.4,218.3 1332.3,218.2 1332.3,249.7 1324.4,249.4" fill="#1c1e20"/><polygon points="1325.7,220.5 1331.0,220.5 1331.0,225.8 1325.7,225.8" fill="#bdb3ae"/><polygon points="1326.2,229.2 1327.4,229.2 1327.4,244.2 1326.2,244.2" fill="#9a857d"/><polygon points="1329.3,229.2 1330.5,229.2 1330.5,244.3 1329.3,244.3" fill="#9a857d"/><polygon points="1324.7,247.5 1332.0,247.8 1332.0,249.4 1324.7,249.1" fill="#5a5d5e"/><polygon points="1323.0,259.4 1332.3,259.9 1332.3,267.0 1323.0,266.3" fill="#303435"/><polygon points="1323.0,266.3 1324.4,266.4 1324.4,301.6 1323.0,301.5" fill="#f28e5e"/><polygon points="1324.4,266.4 1332.3,267.0 1332.3,302.7 1324.4,301.6" fill="#1c1e20"/><polygon points="1325.7,269.0 1331.0,269.4 1331.0,275.4 1325.7,275.0" fill="#bdb3ae"/><polygon points="1326.2,278.9 1327.4,279.0 1327.4,296.0 1326.2,295.9" fill="#9a857d"/><polygon points="1329.3,279.2 1330.5,279.3 1330.5,296.4 1329.3,296.3" fill="#9a857d"/><polygon points="1324.7,299.6 1332.0,300.5 1332.0,302.3 1324.7,301.3" fill="#5a5d5e"/><polygon points="1332.3,143.4 1333.9,143.2 1333.9,305.9 1332.3,305.7" fill="#b9552f"/><path d="M1059.9 181.0L1059.9 268.3" stroke="#2a150c" stroke-width="0.55" fill="none"/><path d="M1061.2 180.8L1061.2 268.4" stroke="#2a150c" stroke-width="0.55" fill="none"/><path d="M1064.9 180.3L1064.9 269.0" stroke="#2a150c" stroke-width="0.55" fill="none"/><path d="M1070.0 179.6L1070.0 269.7" stroke="#2a150c" stroke-width="0.55" fill="none"/><path d="M1073.7 179.1L1073.7 270.2" stroke="#2a150c" stroke-width="0.55" fill="none"/><path d="M1075.2 178.9L1075.2 270.4" stroke="#2a150c" stroke-width="0.55" fill="none"/><path d="M1079.6 178.3L1079.6 271.0" stroke="#2a150c" stroke-width="0.55" fill="none"/><path d="M1084.8 177.5L1084.8 271.7" stroke="#2a150c" stroke-width="0.55" fill="none"/><path d="M1090.7 176.7L1090.7 272.5" stroke="#2a150c" stroke-width="0.55" fill="none"/><path d="M1092.9 176.4L1092.9 272.8" stroke="#2a150c" stroke-width="0.55" fill="none"/><path d="M1097.3 175.8L1097.3 273.4" stroke="#2a150c" stroke-width="0.55" fill="none"/><path d="M1099.5 175.5L1099.5 273.7" stroke="#2a150c" stroke-width="0.55" fill="none"/><path d="M1104.0 174.9L1104.0 274.3" stroke="#2a150c" stroke-width="0.55" fill="none"/><path d="M1110.6 173.9L1110.6 275.2" stroke="#2a150c" stroke-width="0.55" fill="none"/><path d="M1118.7 172.8L1118.7 276.3" stroke="#2a150c" stroke-width="0.55" fill="none"/><path d="M1126.8 171.7L1126.8 277.5" stroke="#2a150c" stroke-width="0.55" fill="none"/><path d="M1131.2 171.1L1131.2 278.1" stroke="#2a150c" stroke-width="0.55" fill="none"/><path d="M1139.4 169.9L1139.4 279.2" stroke="#2a150c" stroke-width="0.55" fill="none"/><path d="M1144.5 169.2L1144.5 279.9" stroke="#2a150c" stroke-width="0.55" fill="none"/><path d="M1153.4 168.0L1153.4 281.1" stroke="#2a150c" stroke-width="0.55" fill="none"/><path d="M1158.0 167.3L1158.0 281.7" stroke="#2a150c" stroke-width="0.55" fill="none"/><path d="M1167.7 166.0L1167.7 283.1" stroke="#2a150c" stroke-width="0.55" fill="none"/><path d="M1172.9 165.2L1172.9 283.8" stroke="#2a150c" stroke-width="0.55" fill="none"/><path d="M1177.3 164.6L1177.3 284.4" stroke="#2a150c" stroke-width="0.55" fill="none"/><path d="M1185.4 163.5L1185.4 285.5" stroke="#2a150c" stroke-width="0.55" fill="none"/><path d="M1200.9 161.3L1200.9 287.6" stroke="#2a150c" stroke-width="0.55" fill="none"/><path d="M1205.7 160.6L1205.7 288.3" stroke="#2a150c" stroke-width="0.55" fill="none"/><path d="M1219.0 158.8L1219.0 290.1" stroke="#2a150c" stroke-width="0.55" fill="none"/><path d="M1224.5 158.0L1224.5 290.9" stroke="#2a150c" stroke-width="0.55" fill="none"/><path d="M1238.5 156.1L1238.5 292.8" stroke="#2a150c" stroke-width="0.55" fill="none"/><path d="M1244.3 155.3L1244.3 293.6" stroke="#2a150c" stroke-width="0.55" fill="none"/><path d="M1252.5 154.1L1252.5 294.7" stroke="#2a150c" stroke-width="0.55" fill="none"/><path d="M1259.1 153.2L1259.1 295.6" stroke="#2a150c" stroke-width="0.55" fill="none"/><path d="M1275.6 150.9L1275.6 297.9" stroke="#2a150c" stroke-width="0.55" fill="none"/><path d="M1296.4 148.0L1296.4 300.8" stroke="#2a150c" stroke-width="0.55" fill="none"/><path d="M1314.1 145.5L1314.1 303.2" stroke="#2a150c" stroke-width="0.55" fill="none"/><path d="M1323.0 144.3L1323.0 304.4" stroke="#2a150c" stroke-width="0.55" fill="none"/><path d="M1332.3 143.0L1332.3 305.7" stroke="#2a150c" stroke-width="0.55" fill="none"/><path d="M1275.6 174.4L1296.4 172.4" stroke="#3b1e12" stroke-width="0.5" fill="none"/><path d="M1332.3 169.0L1353.5 167.0" stroke="#3b1e12" stroke-width="0.5" fill="none"/><polygon points="1352.5,140.1 1357.6,141.3 1357.6,307.3 1352.5,308.5" fill="#ec8055" stroke="#3b1e12" stroke-width="0.5"/><polygon points="1357.6,141.3 1395.0,152.9 1395.0,295.9 1357.6,307.3" fill="#fa8c61" stroke="#3b1e12" stroke-width="0.6"/><path d="M1357.6 167.9L1396.8 176.2" stroke="#3b1e12" stroke-width="0.5" fill="none"/><path d="M1395.0 152.9L1395.0 295.9" stroke="#3b1e12" stroke-width="0.5" fill="none"/><polygon points="1399.8,122.8 1408.8,126.9 1408.8,145.7 1399.8,142.4" fill="#41464d"/><polygon points="1399.8,142.4 1408.8,145.7 1408.8,166.4 1399.8,164.0" fill="#1c1e20"/><polygon points="1413.0,128.8 1421.0,132.4 1421.0,150.1 1413.0,147.2" fill="#41464d"/><polygon points="1413.0,147.2 1421.0,150.1 1421.0,169.7 1413.0,167.5" fill="#1c1e20"/><polygon points="1424.5,134.0 1432.6,137.6 1432.6,154.4 1424.5,151.4" fill="#41464d"/><polygon points="1424.5,151.4 1432.6,154.4 1432.6,172.8 1424.5,170.6" fill="#1c1e20"/><polygon points="1399.5,170.1 1403.5,171.1 1403.5,205.4 1399.5,205.1" fill="#41464d"/><polygon points="1399.5,214.2 1403.5,214.4 1403.5,227.4 1399.5,227.5" fill="#41464d"/><polygon points="1399.5,227.5 1403.5,227.4 1403.5,245.4 1399.5,245.8" fill="#1c1e20"/><polygon points="1399.5,255.8 1403.5,255.2 1403.5,291.1 1399.5,292.3" fill="#1c1e20"/><polygon points="1412.5,173.3 1420.5,175.2 1420.5,206.9 1412.5,206.2" fill="#41464d"/><polygon points="1412.5,214.8 1420.5,215.2 1420.5,227.3 1412.5,227.4" fill="#41464d"/><polygon points="1412.5,227.4 1420.5,227.3 1420.5,243.9 1412.5,244.6" fill="#1c1e20"/><polygon points="1412.5,254.0 1420.5,252.9 1420.5,286.1 1412.5,288.5" fill="#1c1e20"/><polygon points="1428.5,177.2 1432.5,178.1 1432.5,208.0 1428.5,207.6" fill="#41464d"/><polygon points="1428.5,215.6 1432.5,215.8 1432.5,227.1 1428.5,227.2" fill="#41464d"/><polygon points="1428.5,227.2 1432.5,227.1 1432.5,242.8 1428.5,243.1" fill="#1c1e20"/><polygon points="1428.5,251.8 1432.5,251.3 1432.5,282.5 1428.5,283.7" fill="#1c1e20"/><polygon points="1413.6,230.5 1419.4,230.3 1419.4,241.7 1413.6,242.1" fill="#9a857d"/><polygon points="1413.6,258.5 1419.4,257.6 1419.4,281.9 1413.6,283.5" fill="#9a857d"/><polygon points="1438.0,126.4 1495.0,156.3 1495.0,265.2 1438.0,282.7" fill="#3b3f45" stroke="#3b1e12" stroke-width="0.5"/><polygon points="1444.5,129.8 1447.1,131.2 1447.1,279.9 1444.5,280.7" fill="#fa8c61"/><polygon points="1451.5,133.5 1454.0,134.8 1454.0,277.8 1451.5,278.5" fill="#e97d52"/><polygon points="1458.0,136.9 1460.3,138.1 1460.3,275.8 1458.0,276.5" fill="#fa8c61"/><polygon points="1464.0,140.0 1466.2,141.2 1466.2,274.0 1464.0,274.7" fill="#e97d52"/><polygon points="1469.5,142.9 1471.5,144.0 1471.5,272.4 1469.5,273.0" fill="#fa8c61"/><polygon points="1474.5,145.5 1476.3,146.5 1476.3,270.9 1474.5,271.5" fill="#e97d52"/><polygon points="1479.0,147.9 1480.7,148.8 1480.7,269.6 1479.0,270.1" fill="#fa8c61"/><polygon points="1483.5,150.3 1485.0,151.1 1485.0,268.2 1483.5,268.7" fill="#e97d52"/><polygon points="1487.5,152.4 1488.9,153.1 1488.9,267.1 1487.5,267.5" fill="#fa8c61"/><polygon points="1491.5,154.5 1492.8,155.1 1492.8,265.9 1491.5,266.3" fill="#e97d52"/><polygon points="1447.4,175.9 1451.2,176.9 1451.2,209.0 1447.4,208.6" fill="#1c1e20"/><polygon points="1447.4,217.8 1451.2,217.9 1451.2,240.4 1447.4,240.7" fill="#1c1e20"/><polygon points="1454.4,177.8 1457.7,178.7 1457.7,209.6 1454.4,209.3" fill="#1c1e20"/><polygon points="1454.4,218.1 1457.7,218.2 1457.7,239.8 1454.4,240.1" fill="#1c1e20"/><polygon points="1460.9,179.6 1463.7,180.4 1463.7,210.1 1460.9,209.9" fill="#1c1e20"/><polygon points="1460.9,218.3 1463.7,218.4 1463.7,239.3 1460.9,239.5" fill="#1c1e20"/><polygon points="1466.9,181.3 1469.2,181.9 1469.2,210.6 1466.9,210.4" fill="#1c1e20"/><polygon points="1466.9,218.6 1469.2,218.7 1469.2,238.8 1466.9,239.0" fill="#1c1e20"/><polygon points="1472.4,182.8 1474.2,183.3 1474.2,211.1 1472.4,210.9" fill="#1c1e20"/><polygon points="1472.4,218.8 1474.2,218.9 1474.2,238.4 1472.4,238.5" fill="#1c1e20"/><polygon points="1477.4,184.1 1478.7,184.5 1478.7,211.5 1477.4,211.4" fill="#1c1e20"/><polygon points="1477.4,219.0 1478.7,219.1 1478.7,238.0 1477.4,238.1" fill="#1c1e20"/><polygon points="1481.9,185.4 1483.2,185.7 1483.2,211.9 1481.9,211.8" fill="#1c1e20"/><polygon points="1481.9,219.2 1483.2,219.2 1483.2,237.6 1481.9,237.7" fill="#1c1e20"/><polygon points="1486.4,186.6 1487.2,186.8 1487.2,212.3 1486.4,212.2" fill="#1c1e20"/><polygon points="1486.4,219.4 1487.2,219.4 1487.2,237.2 1486.4,237.3" fill="#1c1e20"/><polygon points="1490.4,187.7 1491.2,187.9 1491.2,212.6 1490.4,212.6" fill="#1c1e20"/><polygon points="1490.4,219.5 1491.2,219.6 1491.2,236.9 1490.4,236.9" fill="#1c1e20"/><polygon points="1497.5,175.5 1500.5,176.7 1500.5,213.5 1497.5,213.2" fill="#1c1e20"/><polygon points="1497.5,219.8 1500.5,219.9 1500.5,236.1 1497.5,236.3" fill="#1c1e20"/><polygon points="1497.5,242.9 1500.5,242.5 1500.5,259.5 1497.5,260.4" fill="#1c1e20"/><polygon points="1503.0,177.6 1505.6,178.6 1505.6,214.0 1503.0,213.7" fill="#1c1e20"/><polygon points="1503.0,220.0 1505.6,220.1 1505.6,235.6 1503.0,235.8" fill="#1c1e20"/><polygon points="1503.0,242.2 1505.6,241.8 1505.6,258.1 1503.0,258.9" fill="#1c1e20"/><polygon points="1507.6,179.4 1509.8,180.3 1509.8,214.3 1507.6,214.1" fill="#1c1e20"/><polygon points="1507.6,220.2 1509.8,220.3 1509.8,235.2 1507.6,235.4" fill="#1c1e20"/><polygon points="1507.6,241.5 1509.8,241.2 1509.8,257.0 1507.6,257.6" fill="#1c1e20"/><polygon points="1513.0,220.4 1517.0,220.6 1517.0,234.6 1513.0,235.0" fill="#1c1e20"/><polygon points="1053.0,213.4 1353.5,202.0 1353.5,210.4 1053.0,217.6" fill="#f5f5ef" stroke="#8c8c86" stroke-width="0.4"/><polygon points="1053.0,238.2 1353.5,251.0 1353.5,260.8 1053.0,243.1" fill="#f5f5ef" stroke="#8c8c86" stroke-width="0.4"/><polygon points="1353.5,202.0 1519.0,216.0 1519.0,219.3 1353.5,210.4" fill="#f5f5ef" stroke="#8c8c86" stroke-width="0.4"/><polygon points="1353.5,251.0 1519.0,235.2 1519.0,239.1 1353.5,260.8" fill="#f5f5ef" stroke="#8c8c86" stroke-width="0.4"/><polygon points="1079.5,239.0 1096.5,239.7 1096.5,246.0 1079.5,245.0" fill="#2c2f31"/><polygon points="1352.5,202.0 1357.6,202.3 1357.6,210.6 1352.5,210.4" fill="#ffffff" stroke="#8c8c86" stroke-width="0.4"/><polygon points="1352.5,251.0 1357.6,250.6 1357.6,260.3 1352.5,260.7" fill="#ffffff" stroke="#8c8c86" stroke-width="0.4"/><polygon points="1379.0,249.0 1421.0,245.8 1422.5,250.2 1383.0,257.2 1379.0,255.0" fill="#2a2d2f" stroke="#111" stroke-width="0.4"/><polygon points="1490.0,237.6 1509.0,236.6 1509.5,241.6 1491.0,243.4" fill="#2a2d2f" stroke="#111" stroke-width="0.4"/><polygon points="1455.5,248.2 1474.0,245.6 1474.0,296.0 1455.5,304.0" fill="#2b2e30"/><polygon points="1460.4,277.0 1474.0,277.0 1474.0,296.5 1460.4,296.5" fill="#e9e9e2" stroke="#555" stroke-width="0.4"/><polygon points="1459.0,296.0 1476.0,296.0 1476.0,299.5 1459.0,299.5" fill="#d8d8d0" stroke="#555" stroke-width="0.4"/><polygon points="1462.0,247.3 1472.0,245.9 1472.0,277.0 1462.0,277.0" fill="#2f3335"/><polygon points="1053.0,267.3 1353.5,308.6 1353.5,354.0 1053.0,290.3" fill="#2d3031" stroke="#17191a" stroke-width="0.6"/><polygon points="1353.5,308.6 1455.5,280.4 1455.5,307.4 1353.5,354.0" fill="#3e4248" stroke="#17191a" stroke-width="0.6"/><polygon points="1474.0,266.9 1518.9,259.0 1518.9,277.9 1474.0,291.4" fill="#3e4248" stroke="#17191a" stroke-width="0.6"/><path d="M1354.5 316.2L1455.0 284.9" stroke="#575b5d" stroke-width="0.45" fill="none"/><path d="M1358.4 307.2L1358.4 314.7" stroke="#53575a" stroke-width="0.4" fill="none"/><path d="M1368.0 304.6L1368.0 311.7" stroke="#53575a" stroke-width="0.4" fill="none"/><path d="M1377.3 302.0L1377.3 308.9" stroke="#53575a" stroke-width="0.4" fill="none"/><path d="M1386.3 299.5L1386.3 306.1" stroke="#53575a" stroke-width="0.4" fill="none"/><path d="M1395.1 297.1L1395.1 303.4" stroke="#53575a" stroke-width="0.4" fill="none"/><path d="M1403.5 294.8L1403.5 300.8" stroke="#53575a" stroke-width="0.4" fill="none"/><path d="M1411.6 292.5L1411.6 298.4" stroke="#53575a" stroke-width="0.4" fill="none"/><path d="M1419.3 290.4L1419.3 296.0" stroke="#53575a" stroke-width="0.4" fill="none"/><path d="M1426.6 288.4L1426.6 293.8" stroke="#53575a" stroke-width="0.4" fill="none"/><path d="M1433.5 286.5L1433.5 291.7" stroke="#53575a" stroke-width="0.4" fill="none"/><path d="M1439.8 284.7L1439.8 289.7" stroke="#53575a" stroke-width="0.4" fill="none"/><path d="M1445.5 283.2L1445.5 288.0" stroke="#53575a" stroke-width="0.4" fill="none"/><path d="M1450.5 281.8L1450.5 286.4" stroke="#53575a" stroke-width="0.4" fill="none"/><path d="M1454.4 280.7L1454.4 285.2" stroke="#53575a" stroke-width="0.4" fill="none"/><path d="M1354.5 323.7L1455.0 289.4" stroke="#575b5d" stroke-width="0.45" fill="none"/><path d="M1353.5 316.2L1353.5 323.7" stroke="#53575a" stroke-width="0.4" fill="none"/><path d="M1363.2 313.2L1363.2 320.5" stroke="#53575a" stroke-width="0.4" fill="none"/><path d="M1372.7 310.3L1372.7 317.3" stroke="#53575a" stroke-width="0.4" fill="none"/><path d="M1381.8 307.5L1381.8 314.2" stroke="#53575a" stroke-width="0.4" fill="none"/><path d="M1390.7 304.8L1390.7 311.2" stroke="#53575a" stroke-width="0.4" fill="none"/><path d="M1399.3 302.1L1399.3 308.3" stroke="#53575a" stroke-width="0.4" fill="none"/><path d="M1407.6 299.6L1407.6 305.5" stroke="#53575a" stroke-width="0.4" fill="none"/><path d="M1415.5 297.2L1415.5 302.9" stroke="#53575a" stroke-width="0.4" fill="none"/><path d="M1423.0 294.9L1423.0 300.3" stroke="#53575a" stroke-width="0.4" fill="none"/><path d="M1430.1 292.7L1430.1 298.0" stroke="#53575a" stroke-width="0.4" fill="none"/><path d="M1436.7 290.7L1436.7 295.7" stroke="#53575a" stroke-width="0.4" fill="none"/><path d="M1442.8 288.8L1442.8 293.7" stroke="#53575a" stroke-width="0.4" fill="none"/><path d="M1448.1 287.2L1448.1 291.9" stroke="#53575a" stroke-width="0.4" fill="none"/><path d="M1452.6 285.8L1452.6 290.4" stroke="#53575a" stroke-width="0.4" fill="none"/><path d="M1354.5 331.3L1455.0 293.9" stroke="#575b5d" stroke-width="0.45" fill="none"/><path d="M1358.4 322.1L1358.4 329.5" stroke="#53575a" stroke-width="0.4" fill="none"/><path d="M1368.0 318.9L1368.0 326.0" stroke="#53575a" stroke-width="0.4" fill="none"/><path d="M1377.3 315.7L1377.3 322.6" stroke="#53575a" stroke-width="0.4" fill="none"/><path d="M1386.3 312.7L1386.3 319.3" stroke="#53575a" stroke-width="0.4" fill="none"/><path d="M1395.1 309.7L1395.1 316.1" stroke="#53575a" stroke-width="0.4" fill="none"/><path d="M1403.5 306.9L1403.5 313.0" stroke="#53575a" stroke-width="0.4" fill="none"/><path d="M1411.6 304.2L1411.6 310.0" stroke="#53575a" stroke-width="0.4" fill="none"/><path d="M1419.3 301.6L1419.3 307.2" stroke="#53575a" stroke-width="0.4" fill="none"/><path d="M1426.6 299.1L1426.6 304.5" stroke="#53575a" stroke-width="0.4" fill="none"/><path d="M1433.5 296.8L1433.5 302.0" stroke="#53575a" stroke-width="0.4" fill="none"/><path d="M1439.8 294.7L1439.8 299.7" stroke="#53575a" stroke-width="0.4" fill="none"/><path d="M1445.5 292.8L1445.5 297.6" stroke="#53575a" stroke-width="0.4" fill="none"/><path d="M1450.5 291.1L1450.5 295.7" stroke="#53575a" stroke-width="0.4" fill="none"/><path d="M1454.4 289.8L1454.4 294.3" stroke="#53575a" stroke-width="0.4" fill="none"/><path d="M1354.5 338.9L1455.0 298.4" stroke="#575b5d" stroke-width="0.45" fill="none"/><path d="M1353.5 331.3L1353.5 338.9" stroke="#53575a" stroke-width="0.4" fill="none"/><path d="M1363.2 327.7L1363.2 335.0" stroke="#53575a" stroke-width="0.4" fill="none"/><path d="M1372.7 324.3L1372.7 331.3" stroke="#53575a" stroke-width="0.4" fill="none"/><path d="M1381.8 320.9L1381.8 327.6" stroke="#53575a" stroke-width="0.4" fill="none"/><path d="M1390.7 317.6L1390.7 324.1" stroke="#53575a" stroke-width="0.4" fill="none"/><path d="M1399.3 314.5L1399.3 320.7" stroke="#53575a" stroke-width="0.4" fill="none"/><path d="M1407.6 311.5L1407.6 317.4" stroke="#53575a" stroke-width="0.4" fill="none"/><path d="M1415.5 308.6L1415.5 314.3" stroke="#53575a" stroke-width="0.4" fill="none"/><path d="M1423.0 305.8L1423.0 311.3" stroke="#53575a" stroke-width="0.4" fill="none"/><path d="M1430.1 303.2L1430.1 308.5" stroke="#53575a" stroke-width="0.4" fill="none"/><path d="M1436.7 300.8L1436.7 305.9" stroke="#53575a" stroke-width="0.4" fill="none"/><path d="M1442.8 298.6L1442.8 303.5" stroke="#53575a" stroke-width="0.4" fill="none"/><path d="M1448.1 296.6L1448.1 301.3" stroke="#53575a" stroke-width="0.4" fill="none"/><path d="M1452.6 295.0L1452.6 299.5" stroke="#53575a" stroke-width="0.4" fill="none"/><path d="M1354.5 346.4L1455.0 302.9" stroke="#575b5d" stroke-width="0.45" fill="none"/><path d="M1358.4 336.9L1358.4 344.3" stroke="#53575a" stroke-width="0.4" fill="none"/><path d="M1368.0 333.1L1368.0 340.3" stroke="#53575a" stroke-width="0.4" fill="none"/><path d="M1377.3 329.4L1377.3 336.3" stroke="#53575a" stroke-width="0.4" fill="none"/><path d="M1386.3 325.8L1386.3 332.4" stroke="#53575a" stroke-width="0.4" fill="none"/><path d="M1395.1 322.4L1395.1 328.7" stroke="#53575a" stroke-width="0.4" fill="none"/><path d="M1403.5 319.0L1403.5 325.1" stroke="#53575a" stroke-width="0.4" fill="none"/><path d="M1411.6 315.8L1411.6 321.6" stroke="#53575a" stroke-width="0.4" fill="none"/><path d="M1419.3 312.8L1419.3 318.4" stroke="#53575a" stroke-width="0.4" fill="none"/><path d="M1426.6 309.9L1426.6 315.2" stroke="#53575a" stroke-width="0.4" fill="none"/><path d="M1433.5 307.1L1433.5 312.3" stroke="#53575a" stroke-width="0.4" fill="none"/><path d="M1439.8 304.6L1439.8 309.6" stroke="#53575a" stroke-width="0.4" fill="none"/><path d="M1445.5 302.4L1445.5 307.2" stroke="#53575a" stroke-width="0.4" fill="none"/><path d="M1450.5 300.4L1450.5 305.0" stroke="#53575a" stroke-width="0.4" fill="none"/><path d="M1454.4 298.9L1454.4 303.4" stroke="#53575a" stroke-width="0.4" fill="none"/><path d="M1474.5 273.0L1518.5 263.7" stroke="#575b5d" stroke-width="0.45" fill="none"/><path d="M1474.5 279.1L1518.5 268.4" stroke="#575b5d" stroke-width="0.45" fill="none"/><path d="M1474.5 285.3L1518.5 273.2" stroke="#575b5d" stroke-width="0.45" fill="none"/><defs><linearGradient id="bg2" x1="0" x2="1" y1="0" y2="0"><stop offset="0" stop-color="#55595b"/><stop offset=".55" stop-color="#44484a"/><stop offset="1" stop-color="#2d3031"/></linearGradient></defs><polygon points="1053.0,267.3 1215.0,289.6 1215.0,306.9 1053.0,282.2" fill="url(#bg2)"/><path d="M1054.0 270.1L1200.0 291.4" stroke="#2f3234" stroke-width="0.4" fill="none"/><path d="M1054.0 272.7L1200.0 295.3" stroke="#2f3234" stroke-width="0.4" fill="none"/><path d="M1054.0 275.4L1200.0 299.2" stroke="#2f3234" stroke-width="0.4" fill="none"/><rect x="1215.3" y="298.3" width="4.4" height="4.8" rx="1.2" fill="#0e0f10"/><rect x="1234.3" y="302.2" width="4.4" height="4.8" rx="1.2" fill="#0e0f10"/><rect x="1268.3" y="308.1" width="4.4" height="4.8" rx="1.2" fill="#0e0f10"/><rect x="1333.3" y="321.6" width="4.4" height="4.8" rx="1.2" fill="#0e0f10"/><rect x="1372.6" y="313.8" width="3.8" height="5.2" rx="0.8" fill="#0e0f10"/><polygon points="1405.3,286.8 1420.8,284.8 1420.8,296.3 1411.0,299.0 1405.3,297.8" fill="#565859"/><polygon points="1397.5,298.7 1407.0,297.6 1411.5,301.5 1402.0,317.5 1385.4,315.3" fill="#808385"/><path d="M1397.5 298.7L1408.0 299.5" stroke="#c9cacb" stroke-width="0.7" fill="none"/><path d="M1395.5 301.5L1407.0 302.5" stroke="#c9cacb" stroke-width="0.7" fill="none"/><path d="M1393.5 304.2L1406.0 305.5" stroke="#c9cacb" stroke-width="0.7" fill="none"/><path d="M1391.5 307.0L1405.0 308.5" stroke="#c9cacb" stroke-width="0.7" fill="none"/><path d="M1389.4 309.8L1404.0 311.5" stroke="#c9cacb" stroke-width="0.7" fill="none"/><path d="M1387.4 312.5L1403.0 314.5" stroke="#c9cacb" stroke-width="0.7" fill="none"/><path d="M1385.4 315.3L1402.0 317.5" stroke="#c9cacb" stroke-width="0.7" fill="none"/><path d="M1413.0 300.5L1420.5 297.5" stroke="#d0d0d0" stroke-width="0.9" fill="none"/><polygon points="1066.0,272.5 1070.0,267.0 1084.0,266.0 1096.0,271.5 1082.0,273.5 1072.0,277.5" fill="#74777a"/><polygon points="1498.0,262.0 1508.0,258.0 1517.0,262.0 1512.0,268.5 1502.0,270.0" fill="#6a6d70"/><path d="M1310.5 207.0L1310.5 213.5" stroke="#2030ff" stroke-width="0.8" fill="none"/><path d="M1305.0 214.5L1310.5 214.5" stroke="#ff2020" stroke-width="0.9" fill="none"/><path d="M1310.5 214.5L1317.0 214.5" stroke="#20c020" stroke-width="0.9" fill="none"/><path d="M1049.5 297.5L1054.5 296.5" stroke="#151515" stroke-width="1" fill="none"/><circle cx="991" cy="294" r="46.400" fill="#2f2c2b"/><path d="M991 294V272" stroke="#0000ff" stroke-width="2.200"/><path d="M991 266.500l2.900 8h-5.800z" fill="#0000ff"/><path d="M991 294.300H1008" stroke="#00f000" stroke-width="2.200"/><path d="M1017 294.300l-9-2.900v5.800z" fill="#00f000"/><path d="M991 294.300H977" stroke="#ff0000" stroke-width="2"/><path d="M973 294.300l4.500-2.700 3 2.700-3 2.700z" fill="#ff0000"/><circle cx="991" cy="294" r="3.800" fill="#9a9a9a"/><circle cx="990" cy="293" r="1.600" fill="#c8c8c8"/><text x="991.400" y="260.200" font-family="Liberation Sans, sans-serif" font-size="8.500" font-weight="700" fill="#0000ff">Z</text><text x="1024" y="294" font-family="Liberation Sans, sans-serif" font-size="9" fill="#00f000">Y</text><text x="966.200" y="294" font-family="Liberation Sans, sans-serif" font-size="9" fill="#ff0000">X</text><polygon points="1681.9,83.3 1728.2,75.7 1728.2,147.2 1681.9,138.0" fill="#ffffff"/><polygon points="1730.0,75.7 1754.3,85.8 1754.3,135.6 1730.0,147.2" fill="#ffffff"/><text transform="translate(1689.300,116.600) scale(0.585,1.270)" font-family="Liberation Sans, sans-serif" font-size="14" fill="#8a8a8a">Справа</text><text transform="translate(1735.800,118.800) skewY(-7) scale(0.345,1.550)" font-family="Liberation Sans, sans-serif" font-size="14" fill="#8a8a8a">Сзади</text></svg>
<span class="t" id="logo" style="left:8.2px;top:5.72px;font-size:12.5px;color:#111111;font-weight:400;transform:scaleX(1.25);transform-origin:0 0;letter-spacing:0.2px;-webkit-text-stroke:0.35px #111;">BiMiT</span>
<span class="t" id="space" style="left:453px;top:6.15px;font-size:14px;color:#ffffff;font-weight:400;transform:scaleX(0.9557);transform-origin:0 0;">Базовое пространство</span>
<span class="t" id="school" style="left:1008.3px;top:2.56px;font-size:18px;color:#e6e6e6;font-weight:400;letter-spacing:0.256px;">Школа.</span>
<span class="t" id="help" style="left:22.6px;top:782.46px;font-size:16px;color:#ffffff;font-weight:700;">?</span>
<span class="t" id="tab1" style="left:117px;top:56.73px;font-size:14.5px;color:#ffffff;font-weight:400;letter-spacing:1.361px;">Настройки</span>
<span class="t" id="tab2" style="left:231.2px;top:56.73px;font-size:14.5px;color:#a9a9a9;font-weight:400;letter-spacing:1.420px;">Коллизии</span>
<span class="t" id="tab3" style="left:337.7px;top:56.73px;font-size:14.5px;color:#a9a9a9;font-weight:400;letter-spacing:1.375px;">Проверки</span>
<span class="t" id="treeh" style="left:75px;top:96.15px;font-size:14px;color:#e8e8e8;font-weight:700;transform:scaleX(0.9477);transform-origin:0 0;">Дерево правил</span>
<span class="t" id="expand" style="left:93.2px;top:133.38px;font-size:9px;color:#3490ad;font-weight:400;letter-spacing:1.527px;">Развернуть дерево</span>
<span class="t" id="selall" style="left:365.4px;top:133.38px;font-size:9px;color:#3490ad;font-weight:400;letter-spacing:1.653px;">Выделить всё</span>
<span class="t" id="row0" style="left:92px;top:153.14px;font-size:12px;color:#1c1c1c;font-weight:700;transform:scaleX(0.9364);transform-origin:0 0;">Группа коллизий</span>
<span class="t" id="sh0" style="left:412.3px;top:155.38px;font-size:9px;color:#2a2a2a;font-weight:400;letter-spacing:0.017px;">SHARED</span>
<span class="t" id="row1" style="left:100px;top:177.14px;font-size:12px;color:#1c1c1c;font-weight:400;transform:scaleX(0.9685);transform-origin:0 0;">АР_ВК</span>
<span class="t" id="sh1" style="left:412.3px;top:179.38px;font-size:9px;color:#2a2a2a;font-weight:400;letter-spacing:0.017px;">SHARED</span>
<span class="t" id="row2" style="left:92px;top:201.14px;font-size:12px;color:#1c1c1c;font-weight:700;transform:scaleX(0.9390);transform-origin:0 0;">Группа проверок</span>
<span class="t" id="sh2" style="left:412.3px;top:203.38px;font-size:9px;color:#2a2a2a;font-weight:400;letter-spacing:0.017px;">SHARED</span>
<span class="t" id="row3" style="left:90px;top:225.14px;font-size:12px;color:#3490ad;font-weight:400;letter-spacing:0.167px;">контроль атрибутов</span>
<span class="t" id="sh3" style="left:412.3px;top:227.38px;font-size:9px;color:#2a2a2a;font-weight:400;letter-spacing:0.017px;">SHARED</span>
<span class="t" id="row4" style="left:90px;top:249.14px;font-size:12px;color:#a8a8a8;font-weight:700;transform:scaleX(0.9587);transform-origin:0 0;">Проверки</span>
<span class="t" id="sh4" style="left:412.3px;top:251.38px;font-size:9px;color:#2a2a2a;font-weight:400;letter-spacing:0.017px;">SHARED</span>
<span class="t" id="midh" style="left:510px;top:96.15px;font-size:14px;color:#e8e8e8;font-weight:700;transform:scaleX(0.9381);transform-origin:0 0;">Настройка правила &quot;контроль атрибутов&quot;</span>
<span class="t" id="lab1" style="left:508.5px;top:135.54px;font-size:12px;color:#222222;font-weight:400;letter-spacing:0.124px;">Элементы для контроля</span>
<span class="t" id="vk" style="left:516.7px;top:159.15px;font-size:14px;color:#444444;font-weight:400;letter-spacing:0.500px;">ВК</span>
<span class="t" id="lab2" style="left:508.5px;top:195.64px;font-size:12px;color:#222222;font-weight:400;letter-spacing:0.111px;">Атрибуты для контроля</span>
<span class="t" id="at0" style="left:516px;top:226.95px;font-size:14px;color:#444444;font-weight:400;letter-spacing:-0.071px;">'Высота' больше '55.0' | Больше 55.0</span>
<span class="t" id="at1" style="left:516px;top:266.95px;font-size:14px;color:#444444;font-weight:400;letter-spacing:-0.033px;">'Ширина' меньше '100.0' | Меньше 100.0</span>
<span class="t" id="at2" style="left:516px;top:306.95px;font-size:14px;color:#444444;font-weight:400;letter-spacing:-0.053px;">'ArchiCAD Properties/В зону' имеет значение | Имеет ...</span>
<span class="t" id="at3" style="left:516px;top:346.95px;font-size:14px;color:#444444;font-weight:400;letter-spacing:0.012px;">'BaseQuantities/Area' строка | Строка</span>
<span class="t" id="at4" style="left:516px;top:386.95px;font-size:14px;color:#444444;font-weight:400;letter-spacing:0.118px;">'Common parameters/Привязка к Зоне' число | Число</span>
<span class="t" id="par" style="left:510px;top:466.15px;font-size:14px;color:#e8e8e8;font-weight:700;transform:scaleX(0.9532);transform-origin:0 0;">Параметры передачи элементов в подправила</span>
<span class="t" id="view" style="left:510px;top:503.85px;font-size:14px;color:#e8e8e8;font-weight:700;transform:scaleX(0.9689);transform-origin:0 0;">Просмотр элементов</span>
<span class="t" id="total" style="left:508.3px;top:544.04px;font-size:12px;color:#222222;font-weight:400;letter-spacing:0.021px;">Всего элементов: 0</span>
<span class="t" id="reset" style="left:786.2px;top:547.38px;font-size:9px;color:#3490ad;font-weight:400;letter-spacing:1.137px;">СБРОСИТЬ ВСЁ</span>
<span class="t" id="coll" style="left:985.5px;top:438.15px;font-size:14px;color:#eeeeee;font-weight:400;letter-spacing:0.154px;">Коллизии (количество: 0)</span>
<span class="t" id="th1" style="left:1017.5px;top:471.14px;font-size:12px;color:#e8e8e8;font-weight:700;transform:scaleX(0.9641);transform-origin:0 0;">Статус</span>
<span class="t" id="th2" style="left:1107.2px;top:471.14px;font-size:12px;color:#e8e8e8;font-weight:700;transform:scaleX(0.9694);transform-origin:0 0;">Элемент (Модель А)</span>
<span class="t" id="th3" style="left:1393.3px;top:471.14px;font-size:12px;color:#e8e8e8;font-weight:700;transform:scaleX(0.9653);transform-origin:0 0;">Элемент (Модель В)</span>
<span class="t" id="th4" style="left:1585.5px;top:471.14px;font-size:12px;color:#e8e8e8;font-weight:700;transform:scaleX(0.9510);transform-origin:0 0;">GUID элемента (Модель А)</span>
<span class="t" id="nodata" style="left:1610px;top:501.65px;font-size:14px;color:#9a9a9a;font-weight:400;letter-spacing:0.106px;">Отсутствуют данные</span>
<div style="left:36.9px;top:6.9px;width:2.2px;height:2.2px;background:#ff0000;"></div>
</body></html>
